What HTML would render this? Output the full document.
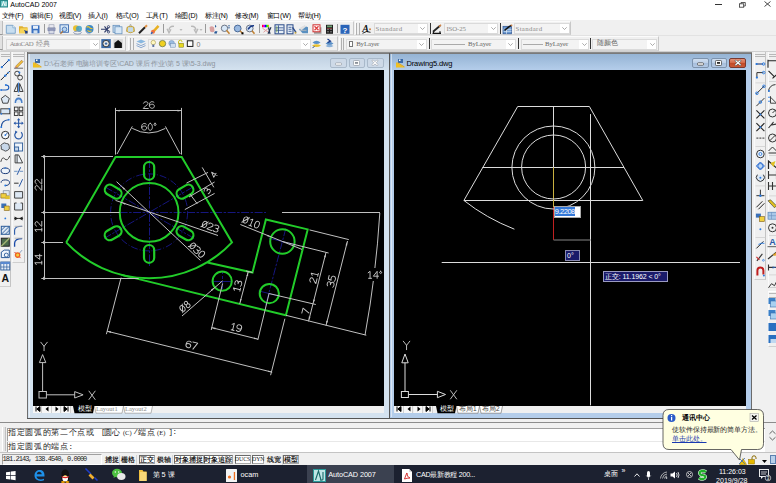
<!DOCTYPE html>
<html><head><meta charset="utf-8">
<style>
*{margin:0;padding:0;box-sizing:border-box}
html,body{width:776px;height:483px;overflow:hidden;background:#f0f0f0;font-family:"Liberation Sans",sans-serif;position:relative}
.a{position:absolute}
.t{position:absolute;white-space:nowrap;line-height:1}
svg{overflow:visible}
</style></head><body>
<div class="a" style="left:0px;top:0px;width:776px;height:20px;background:#fff"></div>
<svg class="a" style="left:0px;top:0px" width="8" height="8" viewBox="0 0 8 8"><rect x="0" y="0" width="8" height="7.5" fill="#2a8a8a"/><rect x="1" y="1" width="6" height="5.5" fill="#6ec4c4"/><path d="M2,6 L3.5,1.5 L5,6 M6,2 L6,6" stroke="#fff" stroke-width="0.9" fill="none"/></svg>
<div class="t" style="left:10.3px;top:1.3px;font-size:7px;color:#000">AutoCAD 2007</div>
<div class="t" style="left:1.5px;top:12.1px;font-size:7px;color:#000;letter-spacing:-0.2px">文件(F)</div>
<div class="t" style="left:30.4px;top:12.1px;font-size:7px;color:#000;letter-spacing:-0.2px">编辑(E)</div>
<div class="t" style="left:58.8px;top:12.1px;font-size:7px;color:#000;letter-spacing:-0.2px">视图(V)</div>
<div class="t" style="left:88px;top:12.1px;font-size:7px;color:#000;letter-spacing:-0.2px">插入(I)</div>
<div class="t" style="left:115.5px;top:12.1px;font-size:7px;color:#000;letter-spacing:-0.2px">格式(O)</div>
<div class="t" style="left:145.6px;top:12.1px;font-size:7px;color:#000;letter-spacing:-0.2px">工具(T)</div>
<div class="t" style="left:174.7px;top:12.1px;font-size:7px;color:#000;letter-spacing:-0.2px">绘图(D)</div>
<div class="t" style="left:205px;top:12.1px;font-size:7px;color:#000;letter-spacing:-0.2px">标注(N)</div>
<div class="t" style="left:234.8px;top:12.1px;font-size:7px;color:#000;letter-spacing:-0.2px">修改(M)</div>
<div class="t" style="left:266.5px;top:12.1px;font-size:7px;color:#000;letter-spacing:-0.2px">窗口(W)</div>
<div class="t" style="left:298px;top:12.1px;font-size:7px;color:#000;letter-spacing:-0.2px">帮助(H)</div>
<div class="a" style="left:715px;top:3.5px;width:6.5px;height:0.8px;background:#333"></div>
<svg class="a" style="left:738.5px;top:1.5px" width="7" height="5.5" viewBox="0 0 7 5.5"><rect x="0.5" y="1.8" width="4.2" height="3.4" fill="none" stroke="#333" stroke-width="0.8"/><path d="M2,1.8 V0.5 H6.3 V4 H4.7" fill="none" stroke="#333" stroke-width="0.8"/></svg>
<svg class="a" style="left:764px;top:1px" width="7" height="6" viewBox="0 0 7 6"><path d="M0.5,0.5 L6.5,5.5 M6.5,0.5 L0.5,5.5" stroke="#333" stroke-width="0.9"/></svg>
<div class="a" style="left:0px;top:20px;width:776px;height:31.5px;background:#f0f0f0"></div>
<div class="a" style="left:0px;top:35.3px;width:776px;height:1px;background:#e2e2e2"></div>
<div class="a" style="left:0px;top:50.8px;width:776px;height:1px;background:#cfcfcf"></div>
<div class="a" style="left:26.5px;top:52px;width:725.5px;height:0.8px;background:#8a8a8a"></div>
<div class="a" style="left:0px;top:21px;width:353.5px;height:14.200000000000003px;background:#f0f0f0;border-top:1px solid #fbfbfb;border-left:1px solid #fbfbfb;border-bottom:1px solid #d4d4d4;border-right:1px solid #c8c8c8"></div>
<div class="a" style="left:355px;top:21px;width:216px;height:14.200000000000003px;background:#f0f0f0;border-top:1px solid #fbfbfb;border-left:1px solid #fbfbfb;border-bottom:1px solid #d4d4d4;border-right:1px solid #c8c8c8"></div>
<div class="a" style="left:0px;top:36.3px;width:125.5px;height:14.300000000000004px;background:#f0f0f0;border-top:1px solid #fbfbfb;border-left:1px solid #fbfbfb;border-bottom:1px solid #d4d4d4;border-right:1px solid #c8c8c8"></div>
<div class="a" style="left:127.5px;top:36.3px;width:210.0px;height:14.300000000000004px;background:#f0f0f0;border-top:1px solid #fbfbfb;border-left:1px solid #fbfbfb;border-bottom:1px solid #d4d4d4;border-right:1px solid #c8c8c8"></div>
<div class="a" style="left:339px;top:36.3px;width:320px;height:14.300000000000004px;background:#f0f0f0;border-top:1px solid #fbfbfb;border-left:1px solid #fbfbfb;border-bottom:1px solid #d4d4d4;border-right:1px solid #c8c8c8"></div>
<div class="a" style="left:356px;top:22.5px;width:0.8px;height:12.200000000000003px;background:#b0b0b0"></div>
<div class="a" style="left:358.8px;top:22.5px;width:0.8px;height:12.200000000000003px;background:#b0b0b0"></div>
<div class="a" style="left:130.3px;top:37.8px;width:0.8px;height:12.300000000000004px;background:#b0b0b0"></div>
<div class="a" style="left:133.10000000000002px;top:37.8px;width:0.8px;height:12.300000000000004px;background:#b0b0b0"></div>
<div class="a" style="left:340.6px;top:37.8px;width:0.8px;height:12.300000000000004px;background:#b0b0b0"></div>
<div class="a" style="left:343.40000000000003px;top:37.8px;width:0.8px;height:12.300000000000004px;background:#b0b0b0"></div>
<div class="a" style="left:0px;top:21px;width:3px;height:14.2px;background:#e2e2e2;border-right:1px solid #bdbdbd;border-bottom:1px solid #999"></div>
<div class="a" style="left:0px;top:36.3px;width:3px;height:14.2px;background:#e2e2e2;border-right:1px solid #bdbdbd;border-bottom:1px solid #999"></div>
<div class="a" style="left:43.5px;top:23.5px;width:1px;height:9.200000000000003px;background:#9a9a9a"></div>
<div class="a" style="left:97.5px;top:23.5px;width:1px;height:9.200000000000003px;background:#9a9a9a"></div>
<div class="a" style="left:163px;top:23.5px;width:1px;height:9.200000000000003px;background:#9a9a9a"></div>
<div class="a" style="left:205px;top:23.5px;width:1px;height:9.200000000000003px;background:#9a9a9a"></div>
<div class="a" style="left:259px;top:23.5px;width:1px;height:9.200000000000003px;background:#9a9a9a"></div>
<div class="a" style="left:337px;top:23.5px;width:1px;height:9.200000000000003px;background:#9a9a9a"></div>
<div class="a" style="left:429.5px;top:23px;width:1.2px;height:11px;background:#333"></div>
<div class="a" style="left:499.5px;top:23px;width:1.2px;height:11px;background:#333"></div>
<div class="a" style="left:428.5px;top:38px;width:1.2px;height:11px;background:#333"></div>
<div class="a" style="left:518px;top:38px;width:1.2px;height:11px;background:#333"></div>
<div class="a" style="left:590px;top:38px;width:1.2px;height:11px;background:#333"></div>
<div class="a" style="left:374px;top:23px;width:53.5px;height:11px;background:#f3f3f3;border:1px solid #dadada"></div>
<div class="a" style="left:417.5px;top:24px;width:9px;height:9px;background:#fff"></div>
<svg class="a" style="left:420.0px;top:27.0px" width="5" height="3" viewBox="0 0 5 3"><path d="M0.3,0.3 L2.5,2.5 L4.7,0.3" fill="none" stroke="#888" stroke-width="0.7"/></svg>
<div class="a" style="left:444px;top:23px;width:54px;height:11px;background:#f3f3f3;border:1px solid #dadada"></div>
<div class="a" style="left:488px;top:24px;width:9px;height:9px;background:#fff"></div>
<svg class="a" style="left:490.5px;top:27.0px" width="5" height="3" viewBox="0 0 5 3"><path d="M0.3,0.3 L2.5,2.5 L4.7,0.3" fill="none" stroke="#888" stroke-width="0.7"/></svg>
<div class="a" style="left:514px;top:23px;width:55.5px;height:11px;background:#f3f3f3;border:1px solid #dadada"></div>
<div class="a" style="left:559.5px;top:24px;width:9px;height:9px;background:#fff"></div>
<svg class="a" style="left:562.0px;top:27.0px" width="5" height="3" viewBox="0 0 5 3"><path d="M0.3,0.3 L2.5,2.5 L4.7,0.3" fill="none" stroke="#888" stroke-width="0.7"/></svg>
<div class="a" style="left:5.5px;top:38.5px;width:94.5px;height:11.5px;background:#f3f3f3;border:1px solid #dadada"></div>
<div class="a" style="left:90px;top:39.5px;width:9px;height:9.5px;background:#fff"></div>
<svg class="a" style="left:92.5px;top:42.75px" width="5" height="3" viewBox="0 0 5 3"><path d="M0.3,0.3 L2.5,2.5 L4.7,0.3" fill="none" stroke="#888" stroke-width="0.7"/></svg>
<div class="t" style="left:375.5px;top:25.6px;font-family:Liberation Serif,serif;color:#8a8a8a;font-size:6.8px;letter-spacing:0.35px">Standard</div>
<div class="t" style="left:515.5px;top:25.6px;font-family:Liberation Serif,serif;color:#8a8a8a;font-size:6.8px;letter-spacing:0.35px">Standard</div>
<div class="t" style="left:446.4px;top:25.6px;font-family:Liberation Serif,serif;color:#8a8a8a;font-size:6.8px;letter-spacing:-0.12px">ISO-25</div>
<div class="t" style="left:9.8px;top:40.9px;font-family:Liberation Serif,serif;color:#8a8a8a;font-size:6.8px;letter-spacing:-0.7px">AutoCAD</div>
<div class="t" style="left:35.7px;top:40.6px;font-size:6.5px;color:#8a8a8a;letter-spacing:0px">经典</div>
<div class="a" style="left:147.5px;top:38.5px;width:163.0px;height:11.5px;background:#f3f3f3;border:1px solid #dadada"></div>
<div class="a" style="left:300.5px;top:39.5px;width:9px;height:9.5px;background:#fff"></div>
<svg class="a" style="left:303.0px;top:42.75px" width="5" height="3" viewBox="0 0 5 3"><path d="M0.3,0.3 L2.5,2.5 L4.7,0.3" fill="none" stroke="#888" stroke-width="0.7"/></svg>
<div class="a" style="left:346px;top:38.5px;width:80.5px;height:11.5px;background:#f3f3f3;border:1px solid #dadada"></div>
<div class="a" style="left:416.5px;top:39.5px;width:9px;height:9.5px;background:#fff"></div>
<svg class="a" style="left:419.0px;top:42.75px" width="5" height="3" viewBox="0 0 5 3"><path d="M0.3,0.3 L2.5,2.5 L4.7,0.3" fill="none" stroke="#888" stroke-width="0.7"/></svg>
<div class="a" style="left:348.5px;top:41.2px;width:4.8px;height:6.2px;background:#fff;border:1px solid #777"></div>
<div class="t" style="left:356.2px;top:41px;font-size:6.8px;color:#666;font-family:Liberation Serif,serif;letter-spacing:-0.1px">ByLayer</div>
<div class="a" style="left:431px;top:38.5px;width:84.5px;height:11.5px;background:#f3f3f3;border:1px solid #dadada"></div>
<div class="a" style="left:505.5px;top:39.5px;width:9px;height:9.5px;background:#fff"></div>
<svg class="a" style="left:508.0px;top:42.75px" width="5" height="3" viewBox="0 0 5 3"><path d="M0.3,0.3 L2.5,2.5 L4.7,0.3" fill="none" stroke="#888" stroke-width="0.7"/></svg>
<div class="a" style="left:434px;top:44px;width:30.5px;height:1.2px;background:#aaa"></div>
<div class="t" style="left:468px;top:41px;font-size:6.8px;color:#666;font-family:Liberation Serif,serif;letter-spacing:-0.1px">ByLayer</div>
<div class="a" style="left:521px;top:38.5px;width:68px;height:11.5px;background:#f3f3f3;border:1px solid #dadada"></div>
<div class="a" style="left:579px;top:39.5px;width:9px;height:9.5px;background:#fff"></div>
<svg class="a" style="left:581.5px;top:42.75px" width="5" height="3" viewBox="0 0 5 3"><path d="M0.3,0.3 L2.5,2.5 L4.7,0.3" fill="none" stroke="#888" stroke-width="0.7"/></svg>
<div class="a" style="left:523px;top:44px;width:20px;height:1.2px;background:#aaa"></div>
<div class="t" style="left:545px;top:41px;font-size:6.8px;color:#666;font-family:Liberation Serif,serif;letter-spacing:-0.1px">ByLayer</div>
<div class="a" style="left:592px;top:38.5px;width:65px;height:11.5px;background:#f3f3f3;border:1px solid #dadada"></div>
<div class="a" style="left:647px;top:39.5px;width:9px;height:9.5px;background:#fff"></div>
<svg class="a" style="left:649.5px;top:42.75px" width="5" height="3" viewBox="0 0 5 3"><path d="M0.3,0.3 L2.5,2.5 L4.7,0.3" fill="none" stroke="#888" stroke-width="0.7"/></svg>
<div class="t" style="left:597px;top:40.45px;font-size:6.8px;color:#666">随颜色</div>
<div class="t" style="left:196.5px;top:41px;font-size:7px;color:#777">0</div>
<div class="a" style="left:0px;top:51.5px;width:26.5px;height:367.5px;background:#f0f0f0"></div>
<div class="a" style="left:0px;top:51.7px;width:11px;height:235px;background:#f0f0f0;border-right:1.2px solid #c4c4c4;border-bottom:1px solid #cfcfcf"></div>
<div class="a" style="left:12px;top:51.7px;width:12.8px;height:211px;background:#f0f0f0;border-left:1px solid #fafafa;border-right:1px solid #c4c4c4;border-bottom:1px solid #cfcfcf"></div>
<div class="a" style="left:0.5px;top:54px;width:9.5px;height:0.9px;background:#b8b8b8"></div>
<div class="a" style="left:0.5px;top:55.8px;width:9.5px;height:0.9px;background:#b8b8b8"></div>
<div class="a" style="left:13px;top:54px;width:10.8px;height:0.9px;background:#b8b8b8"></div>
<div class="a" style="left:13px;top:55.8px;width:10.8px;height:0.9px;background:#b8b8b8"></div>
<div class="a" style="left:26.5px;top:52px;width:1.3px;height:367px;background:#6e6e6e"></div>
<div class="a" style="left:752px;top:51.5px;width:24px;height:367.5px;background:#f0f0f0"></div>
<div class="a" style="left:753.5px;top:51.7px;width:12.8px;height:228px;background:#f0f0f0;border-left:1px solid #fafafa;border-right:1.2px solid #c4c4c4;border-bottom:1px solid #cfcfcf"></div>
<div class="a" style="left:767.8px;top:51.7px;width:8.2px;height:236.5px;background:#f0f0f0;border-left:1px solid #fafafa;border-bottom:1px solid #cfcfcf"></div>
<div class="a" style="left:767.8px;top:290.5px;width:8.2px;height:56.5px;background:#f0f0f0;border-left:1px solid #fafafa;border-top:1px solid #fff;border-bottom:1px solid #cfcfcf"></div>
<div class="a" style="left:754.5px;top:54.3px;width:10.5px;height:0.9px;background:#b8b8b8"></div>
<div class="a" style="left:754.5px;top:56.1px;width:10.5px;height:0.9px;background:#b8b8b8"></div>
<div class="a" style="left:769px;top:54.3px;width:7px;height:0.9px;background:#b8b8b8"></div>
<div class="a" style="left:769px;top:56.1px;width:7px;height:0.9px;background:#b8b8b8"></div>
<div class="a" style="left:769px;top:293.2px;width:7px;height:0.9px;background:#b8b8b8"></div>
<div class="a" style="left:769px;top:296.6px;width:7px;height:0.9px;background:#b8b8b8"></div>
<div class="a" style="left:27.7px;top:52.5px;width:361.3px;height:365.5px;background:#d4e2ef"></div>
<div class="a" style="left:27.7px;top:52.5px;width:361.3px;height:17.900000000000006px;background:linear-gradient(180deg,#bccddf,#d4e2ef)"></div>
<div class="a" style="left:27.7px;top:52.5px;width:361.3px;height:0.8px;background:#7a7a7a"></div>
<div class="a" style="left:32.5px;top:70.4px;width:351.5px;height:335.20000000000005px;background:#000"></div>
<div class="a" style="left:32.5px;top:405.6px;width:351.5px;height:7.6px;background:#f0f0f0"></div>
<div class="a" style="left:28.7px;top:53.5px;width:0.8px;height:363.5px;background:rgba(255,255,255,0.5)"></div>
<div class="a" style="left:390.3px;top:52.5px;width:360.99999999999994px;height:365.5px;background:#b4cdea"></div>
<div class="a" style="left:390.3px;top:52.5px;width:360.99999999999994px;height:17.900000000000006px;background:linear-gradient(180deg,#93b2d3,#b4cdea)"></div>
<div class="a" style="left:390.3px;top:52.5px;width:360.99999999999994px;height:0.8px;background:#7a7a7a"></div>
<div class="a" style="left:394.4px;top:70.4px;width:351.6px;height:335.20000000000005px;background:#000"></div>
<div class="a" style="left:394.4px;top:405.6px;width:351.6px;height:7.6px;background:#f0f0f0"></div>
<div class="a" style="left:391.3px;top:53.5px;width:0.8px;height:363.5px;background:rgba(255,255,255,0.5)"></div>
<div class="a" style="left:388.8px;top:52.5px;width:1.5px;height:366px;background:#555"></div>
<div class="a" style="left:751.2px;top:52.5px;width:1px;height:366px;background:#6b6b6b"></div>
<div class="a" style="left:26.5px;top:418px;width:726px;height:1px;background:#555"></div>
<svg class="a" style="left:33px;top:58.8px" width="8.5" height="8.5" viewBox="0 0 8.5 8.5"><rect x="2" y="0" width="5" height="4" fill="#3a6aa8"/><rect x="3" y="0.5" width="1.5" height="1.5" fill="#fff"/><path d="M0,8.5 L0,3.5 L8.5,8.5 Z" fill="#f0c020"/><path d="M0,3.5 L2,3.5 L8.5,7.5 L8.5,8.5" fill="#e8a810"/></svg>
<div class="t" style="left:44px;top:59.5px;font-size:7px;color:#8d949c;letter-spacing:-0.05px">D:\石老师 电脑培训专区\CAD 课后 作业\第 5 课\5-3.dwg</div>
<svg class="a" style="left:396px;top:58.8px" width="8.5" height="8.5" viewBox="0 0 8.5 8.5"><rect x="2" y="0" width="5" height="4" fill="#3a6aa8"/><rect x="3" y="0.5" width="1.5" height="1.5" fill="#fff"/><path d="M0,8.5 L0,3.5 L8.5,8.5 Z" fill="#f0c020"/><path d="M0,3.5 L2,3.5 L8.5,7.5 L8.5,8.5" fill="#e8a810"/></svg>
<div class="t" style="left:406.5px;top:59.8px;font-size:7.5px;color:#000;letter-spacing:-0.15px">Drawing5.dwg</div>
<div class="a" style="left:330px;top:58.2px;width:16.5px;height:9.6px;background:#cdd9e7;border:1px solid #a9b9ca;border-radius:2px"></div>
<svg class="a" style="left:334.75px;top:62.0px" width="7" height="4" viewBox="0 0 7 4"><rect x="0.5" y="0.8" width="6" height="2.4" rx="0.8" fill="#fafafa" stroke="#9aa2ac" stroke-width="0.8"/></svg>
<div class="a" style="left:348.5px;top:58.2px;width:16.5px;height:9.6px;background:#cdd9e7;border:1px solid #a9b9ca;border-radius:2px"></div>
<svg class="a" style="left:353.25px;top:60.0px" width="7" height="6" viewBox="0 0 7 6"><rect x="0.5" y="0.5" width="6" height="5" rx="0.8" fill="#fafafa" stroke="#9aa2ac" stroke-width="0.8"/><rect x="2" y="2" width="3" height="1.8" fill="#8a9098"/></svg>
<div class="a" style="left:367px;top:58.2px;width:16.5px;height:9.6px;background:#cdd9e7;border:1px solid #a9b9ca;border-radius:2px"></div>
<svg class="a" style="left:372.25px;top:60.2px" width="6" height="5.6" viewBox="0 0 6 5.6"><path d="M0.8,0.8 L5.2,4.8 M5.2,0.8 L0.8,4.8" stroke="#9aa2ac" stroke-width="2.2" stroke-linecap="round"/><path d="M0.8,0.8 L5.2,4.8 M5.2,0.8 L0.8,4.8" stroke="#fafafa" stroke-width="1.2" stroke-linecap="round"/></svg>
<div class="a" style="left:692px;top:58.4px;width:16.5px;height:9.4px;background:linear-gradient(180deg,#cfdef0 0%,#bdd0e8 45%,#a6bedc 55%,#b4c9e4 100%);border:1px solid #7d93ad;border-radius:2px"></div>
<svg class="a" style="left:696.75px;top:62.1px" width="7" height="4" viewBox="0 0 7 4"><rect x="0.5" y="0.8" width="6" height="2.4" rx="0.8" fill="#fafafa" stroke="#4a4a4a" stroke-width="0.8"/></svg>
<div class="a" style="left:710.5px;top:58.4px;width:16.5px;height:9.4px;background:linear-gradient(180deg,#cfdef0 0%,#bdd0e8 45%,#a6bedc 55%,#b4c9e4 100%);border:1px solid #7d93ad;border-radius:2px"></div>
<svg class="a" style="left:715.25px;top:60.1px" width="7" height="6" viewBox="0 0 7 6"><rect x="0.5" y="0.5" width="6" height="5" rx="0.8" fill="#fafafa" stroke="#4a4a4a" stroke-width="0.8"/><rect x="2" y="2" width="3" height="1.8" fill="#2a2a2a"/></svg>
<div class="a" style="left:729px;top:58.4px;width:17px;height:9.4px;background:linear-gradient(180deg,#e4937a 0%,#d46a4a 45%,#c24a28 55%,#cc5a38 100%);border:1px solid #7a3a30;border-radius:2px"></div>
<svg class="a" style="left:734.5px;top:60.300000000000004px" width="6" height="5.6" viewBox="0 0 6 5.6"><path d="M0.8,0.8 L5.2,4.8 M5.2,0.8 L0.8,4.8" stroke="#4a4a4a" stroke-width="2.2" stroke-linecap="round"/><path d="M0.8,0.8 L5.2,4.8 M5.2,0.8 L0.8,4.8" stroke="#fafafa" stroke-width="1.2" stroke-linecap="round"/></svg>
<div class="a" style="left:32.8px;top:405.6px;width:9.2px;height:7.3px;background:#f7f7f7;border-right:1px solid #d0d0d0"></div>
<div class="a" style="left:42.4px;top:405.6px;width:9.2px;height:7.3px;background:#f7f7f7;border-right:1px solid #d0d0d0"></div>
<div class="a" style="left:52.0px;top:405.6px;width:9.2px;height:7.3px;background:#f7f7f7;border-right:1px solid #d0d0d0"></div>
<div class="a" style="left:61.599999999999994px;top:405.6px;width:9.2px;height:7.3px;background:#f7f7f7;border-right:1px solid #d0d0d0"></div>
<svg class="a" style="left:34.5px;top:406.40000000000003px" width="6" height="6" viewBox="0 0 6 6"><path d="M1,0.5 V5.5 M5,0.5 L1.8,3 L5,5.5 Z" stroke="#000" stroke-width="1" fill="#000"/></svg>
<svg class="a" style="left:44.1px;top:406.40000000000003px" width="6" height="6" viewBox="0 0 6 6"><path d="M4.5,0.5 L1.5,3 L4.5,5.5 Z" fill="#000"/></svg>
<svg class="a" style="left:53.7px;top:406.40000000000003px" width="6" height="6" viewBox="0 0 6 6"><path d="M1.5,0.5 L4.5,3 L1.5,5.5 Z" fill="#000"/></svg>
<svg class="a" style="left:63.3px;top:406.40000000000003px" width="6" height="6" viewBox="0 0 6 6"><path d="M5,0.5 V5.5 M1,0.5 L4.2,3 L1,5.5 Z" stroke="#000" stroke-width="1" fill="#000"/></svg>
<div class="a" style="left:394.7px;top:405.6px;width:9.2px;height:7.3px;background:#f7f7f7;border-right:1px solid #d0d0d0"></div>
<div class="a" style="left:404.3px;top:405.6px;width:9.2px;height:7.3px;background:#f7f7f7;border-right:1px solid #d0d0d0"></div>
<div class="a" style="left:413.9px;top:405.6px;width:9.2px;height:7.3px;background:#f7f7f7;border-right:1px solid #d0d0d0"></div>
<div class="a" style="left:423.5px;top:405.6px;width:9.2px;height:7.3px;background:#f7f7f7;border-right:1px solid #d0d0d0"></div>
<svg class="a" style="left:396.4px;top:406.40000000000003px" width="6" height="6" viewBox="0 0 6 6"><path d="M1,0.5 V5.5 M5,0.5 L1.8,3 L5,5.5 Z" stroke="#000" stroke-width="1" fill="#000"/></svg>
<svg class="a" style="left:406.0px;top:406.40000000000003px" width="6" height="6" viewBox="0 0 6 6"><path d="M4.5,0.5 L1.5,3 L4.5,5.5 Z" fill="#000"/></svg>
<svg class="a" style="left:415.59999999999997px;top:406.40000000000003px" width="6" height="6" viewBox="0 0 6 6"><path d="M1.5,0.5 L4.5,3 L1.5,5.5 Z" fill="#000"/></svg>
<svg class="a" style="left:425.2px;top:406.40000000000003px" width="6" height="6" viewBox="0 0 6 6"><path d="M5,0.5 V5.5 M1,0.5 L4.2,3 L1,5.5 Z" stroke="#000" stroke-width="1" fill="#000"/></svg>
<svg class="a" style="left:72px;top:405.6px" width="85" height="7.5" viewBox="0 0 85 7.5"><path d="M1,0 L2.5,7.2 L21,7.2 L22.5,0 Z" fill="#000"/><path d="M22.5,0 L24,7.2 L50,7.2 L51.5,0" fill="#fff" stroke="#888" stroke-width="0.6"/><path d="M51.5,0 L53,7.2 L79,7.2 L80.5,0" fill="#fff" stroke="#888" stroke-width="0.6"/></svg>
<div class="t" style="left:78px;top:406px;font-size:6.5px;color:#fff">模型</div>
<div class="t" style="left:96px;top:406.2px;font-size:6.5px;color:#888;font-family:Liberation Serif,serif">Layout1</div>
<div class="t" style="left:125px;top:406.2px;font-size:6.5px;color:#888;font-family:Liberation Serif,serif">Layout2</div>
<svg class="a" style="left:435px;top:405.6px" width="70" height="7.5" viewBox="0 0 70 7.5"><path d="M1,0 L2.5,7.2 L20,7.2 L21.5,0 Z" fill="#000"/><path d="M21.5,0 L23,7.2 L43,7.2 L44.5,0" fill="#fff" stroke="#666" stroke-width="0.6"/><path d="M44.5,0 L46,7.2 L66,7.2 L67.5,0" fill="#fff" stroke="#666" stroke-width="0.6"/></svg>
<div class="t" style="left:440px;top:406px;font-size:6.5px;color:#fff">模型</div>
<div class="t" style="left:459px;top:406px;font-size:6.5px;color:#444">布局1</div>
<div class="t" style="left:482px;top:406px;font-size:6.5px;color:#444">布局2</div>
<svg class="a" style="left:0;top:0" width="776" height="483" viewBox="0 0 776 483" font-family="Liberation Sans, sans-serif">
<defs><clipPath id="cl"><rect x="32.5" y="70.4" width="351.5" height="335.2"/></clipPath><clipPath id="cr"><rect x="394.4" y="70.4" width="351.6" height="335.2"/></clipPath></defs>
<g clip-path="url(#cl)"><line x1="119.6" y1="212.5" x2="266.0" y2="212.5" stroke="#16167e" stroke-width="1" stroke-dasharray="8 1.5 2.5 1.5"/>
<line x1="149.5" y1="160.0" x2="149.5" y2="266.0" stroke="#16167e" stroke-width="1" stroke-dasharray="8 1.5 2.5 1.5"/>
<line x1="104.1" y1="238.4" x2="194.1" y2="186.4" stroke="#16167e" stroke-width="1" stroke-dasharray="8 1.5 2.5 1.5"/>
<line x1="194.1" y1="238.4" x2="104.1" y2="186.4" stroke="#16167e" stroke-width="1" stroke-dasharray="8 1.5 2.5 1.5"/>
<circle cx="149.1" cy="212.4" r="38.5" fill="none" stroke="#16167e" stroke-width="1" stroke-dasharray="7 2 1 2"/>
<line x1="285.8" y1="228.4" x2="265.4" y2="306.4" stroke="#16167e" stroke-width="1" stroke-dasharray="8 1.5 2.5 1.5"/>
<line x1="212.0" y1="281.5" x2="232.0" y2="281.5" stroke="#16167e" stroke-width="1" />
<line x1="268.8" y1="238.1" x2="296.0" y2="244.9" stroke="#16167e" stroke-width="1" />
<line x1="258.6" y1="290.9" x2="280.0" y2="296.3" stroke="#16167e" stroke-width="1" />
<line x1="222.5" y1="271.0" x2="222.5" y2="291.0" stroke="#16167e" stroke-width="1" stroke-dasharray="3 2"/>
<circle cx="149.1" cy="212.4" r="29.4" fill="none" stroke="#22cc2a" stroke-width="2"/>
<rect x="179.9" y="182.8" width="10.2" height="17.8" rx="5.1" fill="none" stroke="#22cc2a" stroke-width="2.2" transform="rotate(60 185.0 191.7)"/>
<rect x="144.0" y="162.0" width="10.2" height="17.8" rx="5.1" fill="none" stroke="#22cc2a" stroke-width="2.2" transform="rotate(0 149.1 170.9)"/>
<rect x="108.1" y="182.8" width="10.2" height="17.8" rx="5.1" fill="none" stroke="#22cc2a" stroke-width="2.2" transform="rotate(-60 113.2 191.7)"/>
<rect x="108.1" y="224.2" width="10.2" height="17.8" rx="5.1" fill="none" stroke="#22cc2a" stroke-width="2.2" transform="rotate(-120 113.2 233.2)"/>
<rect x="144.0" y="245.0" width="10.2" height="17.8" rx="5.1" fill="none" stroke="#22cc2a" stroke-width="2.2" transform="rotate(-180 149.1 253.9)"/>
<rect x="179.9" y="224.3" width="10.2" height="17.8" rx="5.1" fill="none" stroke="#22cc2a" stroke-width="2.2" transform="rotate(-240 185.0 233.2)"/>
<path d="M66.2,242.4 L115.5,157 L181.7,157 L232,242.4 A113.9,113.9 0 0 1 66.2,242.4" fill="none" stroke="#22cc2a" stroke-width="2" stroke-linejoin="miter"/>
<path d="M207.4,262.5 L252.5,272.5 L265.9,219.5 L307.7,229.4 L285.9,315.3 L121.5,274.9" fill="none" stroke="#22cc2a" stroke-width="2"/>
<circle cx="222.2" cy="281.2" r="9.6" fill="none" stroke="#22cc2a" stroke-width="2"/>
<circle cx="282.4" cy="241.5" r="12.2" fill="none" stroke="#22cc2a" stroke-width="2"/>
<circle cx="269.3" cy="293.6" r="9.6" fill="none" stroke="#22cc2a" stroke-width="2"/>
<line x1="115.5" y1="107.9" x2="115.5" y2="154.6" stroke="#c0c0c0" stroke-width="1" />
<line x1="181.5" y1="107.9" x2="181.5" y2="154.6" stroke="#c0c0c0" stroke-width="1" />
<line x1="115.7" y1="110.5" x2="181.5" y2="110.5" stroke="#c0c0c0" stroke-width="1" />
<polygon points="115.7,110.7 119.7,109.8 119.7,111.6" fill="#c0c0c0"/>
<polygon points="181.5,110.7 177.5,111.6 177.5,109.8" fill="#c0c0c0"/>
<g transform="translate(148.80,105.00) rotate(0) scale(1.000) translate(-5.55,-3.5)" fill="none" stroke="#c4c4c4" stroke-width="0.95" stroke-linecap="round" stroke-linejoin="round"><path transform="translate(0.00,0)" d="M0.2,1.7 C0.6,-0.3 4.7,-0.4 4.7,2 C4.7,3.6 0.4,5.3 0,7 H5"/><path transform="translate(6.10,0)" d="M4.6,0.8 C3.1,-0.5 0,-0.3 0,3.8 C0,7.6 5,7.6 5,4.7 C5,2.1 1,2.1 0.1,4.2"/></g>
<line x1="117.0" y1="154.0" x2="132.3" y2="126.4" stroke="#c0c0c0" stroke-width="1" />
<line x1="180.2" y1="154.0" x2="165.4" y2="126.4" stroke="#c0c0c0" stroke-width="1" />
<path d="M132.3,128.4 Q148.8,137.5 165.4,128.4" fill="none" stroke="#c0c0c0" stroke-width="1"/>
<g transform="translate(148.80,126.80) rotate(0) scale(1.000) translate(-7.15,-3.5)" fill="none" stroke="#c4c4c4" stroke-width="0.95" stroke-linecap="round" stroke-linejoin="round"><path transform="translate(0.00,0)" d="M4.6,0.8 C3.1,-0.5 0,-0.3 0,3.8 C0,7.6 5,7.6 5,4.7 C5,2.1 1,2.1 0.1,4.2"/><path transform="translate(6.10,0)" d="M2.5,0 C-0.4,0 -0.4,7 2.5,7 C5.4,7 5.4,0 2.5,0 Z"/><path transform="translate(12.20,0)" d="M1.2,0 C-0.2,0 -0.2,2.2 1.2,2.2 C2.6,2.2 2.6,0 1.2,0 Z"/></g>
<line x1="41.3" y1="156.5" x2="113.0" y2="156.5" stroke="#c0c0c0" stroke-width="1" />
<line x1="44.5" y1="156.6" x2="44.5" y2="278.3" stroke="#c0c0c0" stroke-width="1" />
<line x1="41.3" y1="212.5" x2="119.6" y2="212.5" stroke="#c0c0c0" stroke-width="1" />
<line x1="41.3" y1="242.5" x2="63.0" y2="242.5" stroke="#c0c0c0" stroke-width="1" />
<line x1="41.3" y1="278.5" x2="138.7" y2="278.5" stroke="#c0c0c0" stroke-width="1" />
<rect x="43.1" y="155.1" width="2" height="3" fill="#c0c0c0"/>
<rect x="43.1" y="210.9" width="2" height="3" fill="#c0c0c0"/>
<rect x="43.1" y="240.9" width="2" height="3" fill="#c0c0c0"/>
<rect x="43.1" y="276.8" width="2" height="3" fill="#c0c0c0"/>
<g transform="translate(38.30,184.70) rotate(-90) scale(1.000) translate(-5.55,-3.5)" fill="none" stroke="#c4c4c4" stroke-width="0.95" stroke-linecap="round" stroke-linejoin="round"><path transform="translate(0.00,0)" d="M0.2,1.7 C0.6,-0.3 4.7,-0.4 4.7,2 C4.7,3.6 0.4,5.3 0,7 H5"/><path transform="translate(6.10,0)" d="M0.2,1.7 C0.6,-0.3 4.7,-0.4 4.7,2 C4.7,3.6 0.4,5.3 0,7 H5"/></g>
<g transform="translate(38.30,226.90) rotate(-90) scale(1.000) translate(-5.55,-3.5)" fill="none" stroke="#c4c4c4" stroke-width="0.95" stroke-linecap="round" stroke-linejoin="round"><path transform="translate(0.00,0)" d="M0.9,1.5 L2.8,0 V7 M1.3,7 H4.3"/><path transform="translate(6.10,0)" d="M0.2,1.7 C0.6,-0.3 4.7,-0.4 4.7,2 C4.7,3.6 0.4,5.3 0,7 H5"/></g>
<g transform="translate(38.30,260.00) rotate(-90) scale(1.000) translate(-5.55,-3.5)" fill="none" stroke="#c4c4c4" stroke-width="0.95" stroke-linecap="round" stroke-linejoin="round"><path transform="translate(0.00,0)" d="M0.9,1.5 L2.8,0 V7 M1.3,7 H4.3"/><path transform="translate(6.10,0)" d="M3.8,7 V0 L0,4.9 H5.2"/></g>
<line x1="116.6" y1="181.7" x2="200.4" y2="260.4" stroke="#c0c0c0" stroke-width="1" />
<polygon points="121.5,186.3 125.0,188.4 123.8,189.7" fill="#c0c0c0"/>
<g transform="translate(197.20,250.00) rotate(43) scale(1.000) translate(-8.60,-3.5)" fill="none" stroke="#c4c4c4" stroke-width="0.95" stroke-linecap="round" stroke-linejoin="round"><path transform="translate(0.00,0)" d="M2.5,0.3 C-0.4,0.3 -0.4,6.7 2.5,6.7 C5.4,6.7 5.4,0.3 2.5,0.3 Z M-0.2,7 L5.2,0"/><path transform="translate(6.10,0)" d="M0.2,0.9 C1.4,-0.4 4.8,-0.1 4.7,1.8 C4.6,3.1 3.2,3.4 2,3.4 C3.6,3.4 5,3.9 5,5.2 C5,7.5 1.1,7.4 0,6.3"/><path transform="translate(12.20,0)" d="M2.5,0 C-0.4,0 -0.4,7 2.5,7 C5.4,7 5.4,0 2.5,0 Z"/></g>
<line x1="115.5" y1="200.4" x2="218.0" y2="235.5" stroke="#c0c0c0" stroke-width="1" />
<polygon points="121.5,202.5 125.6,203.0 125.0,204.7" fill="#c0c0c0"/>
<g transform="translate(210.40,226.40) rotate(19.5) scale(1.000) translate(-8.60,-3.5)" fill="none" stroke="#c4c4c4" stroke-width="0.95" stroke-linecap="round" stroke-linejoin="round"><path transform="translate(0.00,0)" d="M2.5,0.3 C-0.4,0.3 -0.4,6.7 2.5,6.7 C5.4,6.7 5.4,0.3 2.5,0.3 Z M-0.2,7 L5.2,0"/><path transform="translate(6.10,0)" d="M0.2,1.7 C0.6,-0.3 4.7,-0.4 4.7,2 C4.7,3.6 0.4,5.3 0,7 H5"/><path transform="translate(12.20,0)" d="M0.2,0.9 C1.4,-0.4 4.8,-0.1 4.7,1.8 C4.6,3.1 3.2,3.4 2,3.4 C3.6,3.4 5,3.9 5,5.2 C5,7.5 1.1,7.4 0,6.3"/></g>
<line x1="186.5" y1="183.1" x2="208.0" y2="172.4" stroke="#c0c0c0" stroke-width="1" />
<line x1="189.0" y1="197.0" x2="214.6" y2="182.0" stroke="#c0c0c0" stroke-width="1" />
<line x1="184.8" y1="209.6" x2="214.6" y2="193.4" stroke="#c0c0c0" stroke-width="1" />
<line x1="202.2" y1="167.4" x2="213.8" y2="187.3" stroke="#c0c0c0" stroke-width="1" />
<line x1="189.8" y1="193.9" x2="197.3" y2="203.8" stroke="#c0c0c0" stroke-width="1" />
<g transform="translate(213.80,174.80) rotate(-60) scale(0.895) translate(-2.50,-3.5)" fill="none" stroke="#c4c4c4" stroke-width="1.06" stroke-linecap="round" stroke-linejoin="round"><path transform="translate(0.00,0)" d="M3.8,7 V0 L0,4.9 H5.2"/></g>
<g transform="translate(207.20,190.60) rotate(-60) scale(0.895) translate(-2.50,-3.5)" fill="none" stroke="#c4c4c4" stroke-width="1.06" stroke-linecap="round" stroke-linejoin="round"><path transform="translate(0.00,0)" d="M0.2,0.9 C1.4,-0.4 4.8,-0.1 4.7,1.8 C4.6,3.1 3.2,3.4 2,3.4 C3.6,3.4 5,3.9 5,5.2 C5,7.5 1.1,7.4 0,6.3"/></g>
<line x1="240.4" y1="224.5" x2="302.0" y2="249.4" stroke="#c0c0c0" stroke-width="1" />
<polygon points="271.2,237.0 267.2,236.3 267.8,234.7" fill="#c0c0c0"/>
<g transform="translate(251.30,222.30) rotate(22) scale(1.000) translate(-8.60,-3.5)" fill="none" stroke="#c4c4c4" stroke-width="0.95" stroke-linecap="round" stroke-linejoin="round"><path transform="translate(0.00,0)" d="M2.5,0.3 C-0.4,0.3 -0.4,6.7 2.5,6.7 C5.4,6.7 5.4,0.3 2.5,0.3 Z M-0.2,7 L5.2,0"/><path transform="translate(6.10,0)" d="M0.9,1.5 L2.8,0 V7 M1.3,7 H4.3"/><path transform="translate(12.20,0)" d="M2.5,0 C-0.4,0 -0.4,7 2.5,7 C5.4,7 5.4,0 2.5,0 Z"/></g>
<line x1="309.5" y1="229.9" x2="348.8" y2="239.6" stroke="#c0c0c0" stroke-width="1" />
<line x1="282.4" y1="241.5" x2="328.6" y2="253.0" stroke="#c0c0c0" stroke-width="1" />
<line x1="269.3" y1="293.6" x2="315.8" y2="304.5" stroke="#c0c0c0" stroke-width="1" />
<line x1="285.9" y1="315.3" x2="366.3" y2="335.2" stroke="#c0c0c0" stroke-width="1" />
<line x1="347.5" y1="241.0" x2="326.0" y2="325.7" stroke="#c0c0c0" stroke-width="1" />
<polygon points="347.3,241.5 347.2,245.6 345.5,245.2" fill="#c0c0c0"/>
<polygon points="326.2,324.8 326.3,320.7 328.0,321.1" fill="#c0c0c0"/>
<line x1="326.0" y1="252.5" x2="308.5" y2="321.4" stroke="#c0c0c0" stroke-width="1" />
<polygon points="325.8,253.3 325.7,257.4 324.0,257.0" fill="#c0c0c0"/>
<polygon points="313.3,303.5 313.4,299.4 315.1,299.8" fill="#c0c0c0"/>
<polygon points="308.7,320.6 308.8,316.5 310.5,316.9" fill="#c0c0c0"/>
<g transform="translate(331.30,281.30) rotate(-76) scale(1.000) translate(-5.55,-3.5)" fill="none" stroke="#c4c4c4" stroke-width="0.95" stroke-linecap="round" stroke-linejoin="round"><path transform="translate(0.00,0)" d="M0.2,0.9 C1.4,-0.4 4.8,-0.1 4.7,1.8 C4.6,3.1 3.2,3.4 2,3.4 C3.6,3.4 5,3.9 5,5.2 C5,7.5 1.1,7.4 0,6.3"/><path transform="translate(6.10,0)" d="M4.7,0 H0.9 L0.5,3.1 C2,2.2 5,2.4 5,4.7 C5,7.5 1.2,7.4 0,6.3"/></g>
<g transform="translate(313.80,277.30) rotate(-76) scale(1.000) translate(-5.55,-3.5)" fill="none" stroke="#c4c4c4" stroke-width="0.95" stroke-linecap="round" stroke-linejoin="round"><path transform="translate(0.00,0)" d="M0.2,1.7 C0.6,-0.3 4.7,-0.4 4.7,2 C4.7,3.6 0.4,5.3 0,7 H5"/><path transform="translate(6.10,0)" d="M0.9,1.5 L2.8,0 V7 M1.3,7 H4.3"/></g>
<g transform="translate(305.80,311.50) rotate(-76) scale(1.000) translate(-2.50,-3.5)" fill="none" stroke="#c4c4c4" stroke-width="0.95" stroke-linecap="round" stroke-linejoin="round"><path transform="translate(0.00,0)" d="M0,0 H5 L1.8,7"/></g>
<line x1="282.0" y1="212.5" x2="380.0" y2="212.5" stroke="#c0c0c0" stroke-width="1" />
<path d="M379.8,213 Q376,275 365,335.2" fill="none" stroke="#c0c0c0" stroke-width="1"/>
<rect x="364" y="268" width="21" height="13" fill="#000"/>
<g transform="translate(374.40,274.80) rotate(0) scale(1.000) translate(-7.15,-3.5)" fill="none" stroke="#c4c4c4" stroke-width="0.95" stroke-linecap="round" stroke-linejoin="round"><path transform="translate(0.00,0)" d="M0.9,1.5 L2.8,0 V7 M1.3,7 H4.3"/><path transform="translate(6.10,0)" d="M3.8,7 V0 L0,4.9 H5.2"/><path transform="translate(12.20,0)" d="M1.2,0 C-0.2,0 -0.2,2.2 1.2,2.2 C2.6,2.2 2.6,0 1.2,0 Z"/></g>
<line x1="121.1" y1="277.6" x2="106.4" y2="334.2" stroke="#c0c0c0" stroke-width="1" />
<line x1="284.9" y1="318.7" x2="270.6" y2="375.2" stroke="#c0c0c0" stroke-width="1" />
<line x1="107.0" y1="331.2" x2="272.2" y2="372.2" stroke="#c0c0c0" stroke-width="1" />
<polygon points="107.0,331.2 111.1,331.3 110.7,333.0" fill="#c0c0c0"/>
<polygon points="272.2,372.2 268.1,372.1 268.5,370.4" fill="#c0c0c0"/>
<g transform="translate(191.50,345.20) rotate(14) scale(1.000) translate(-5.55,-3.5)" fill="none" stroke="#c4c4c4" stroke-width="0.95" stroke-linecap="round" stroke-linejoin="round"><path transform="translate(0.00,0)" d="M4.6,0.8 C3.1,-0.5 0,-0.3 0,3.8 C0,7.6 5,7.6 5,4.7 C5,2.1 1,2.1 0.1,4.2"/><path transform="translate(6.10,0)" d="M0,0 H5 L1.8,7"/></g>
<line x1="222.6" y1="283.5" x2="211.2" y2="330.0" stroke="#c0c0c0" stroke-width="1" />
<line x1="269.2" y1="293.0" x2="257.8" y2="340.0" stroke="#c0c0c0" stroke-width="1" />
<line x1="211.5" y1="327.6" x2="258.0" y2="339.2" stroke="#c0c0c0" stroke-width="1" />
<polygon points="211.5,327.6 215.6,327.7 215.2,329.4" fill="#c0c0c0"/>
<polygon points="258.0,339.2 253.9,339.1 254.3,337.4" fill="#c0c0c0"/>
<g transform="translate(236.10,327.40) rotate(14) scale(1.000) translate(-5.55,-3.5)" fill="none" stroke="#c4c4c4" stroke-width="0.95" stroke-linecap="round" stroke-linejoin="round"><path transform="translate(0.00,0)" d="M0.9,1.5 L2.8,0 V7 M1.3,7 H4.3"/><path transform="translate(6.10,0)" d="M4.9,3 C3.9,4.9 0,4.8 0,2.3 C0,-0.7 5,-0.8 5,3.2 C5,7.3 1.9,7.5 0.4,6.3"/></g>
<line x1="252.5" y1="272.5" x2="246.0" y2="271.0" stroke="#c0c0c0" stroke-width="1" />
<line x1="248.3" y1="271.4" x2="239.7" y2="303.8" stroke="#c0c0c0" stroke-width="1" />
<polygon points="248.2,272.0 248.1,276.1 246.4,275.7" fill="#c0c0c0"/>
<polygon points="240.0,303.0 240.1,298.9 241.8,299.3" fill="#c0c0c0"/>
<g transform="translate(237.50,286.20) rotate(-76) scale(1.000) translate(-5.55,-3.5)" fill="none" stroke="#c4c4c4" stroke-width="0.95" stroke-linecap="round" stroke-linejoin="round"><path transform="translate(0.00,0)" d="M0.9,1.5 L2.8,0 V7 M1.3,7 H4.3"/><path transform="translate(6.10,0)" d="M0.2,0.9 C1.4,-0.4 4.8,-0.1 4.7,1.8 C4.6,3.1 3.2,3.4 2,3.4 C3.6,3.4 5,3.9 5,5.2 C5,7.5 1.1,7.4 0,6.3"/></g>
<line x1="182.0" y1="316.0" x2="222.6" y2="280.8" stroke="#c0c0c0" stroke-width="1" />
<polygon points="214.6,287.5 212.2,290.8 211.0,289.4" fill="#c0c0c0"/>
<g transform="translate(184.80,306.40) rotate(-41) scale(1.000) translate(-5.55,-3.5)" fill="none" stroke="#c4c4c4" stroke-width="0.95" stroke-linecap="round" stroke-linejoin="round"><path transform="translate(0.00,0)" d="M2.5,0.3 C-0.4,0.3 -0.4,6.7 2.5,6.7 C5.4,6.7 5.4,0.3 2.5,0.3 Z M-0.2,7 L5.2,0"/><path transform="translate(6.10,0)" d="M2.5,3.3 C0.2,3.3 0.3,0 2.5,0 C4.7,0 4.8,3.3 2.5,3.3 C-0.1,3.4 -0.1,7 2.5,7 C5.1,7 5.1,3.4 2.5,3.3 Z"/></g>
<g transform="translate(44.00,346.00) rotate(0) scale(1.086) translate(-2.95,-3.5)" fill="none" stroke="#c4c4c4" stroke-width="0.88" stroke-linecap="round" stroke-linejoin="round"><path transform="translate(0.00,0)" d="M0,0 L3,3.8 L6,0 M3,3.8 V7.8"/></g>
<polygon points="42.6,354.6 45.8,362.6 39.4,362.6" fill="none" stroke="#c0c0c0" stroke-width="1"/>
<line x1="42.6" y1="362.6" x2="42.6" y2="391.5" stroke="#c0c0c0"/>
<rect x="39" y="391.5" width="7.4" height="6.5" fill="none" stroke="#c0c0c0"/>
<line x1="46.4" y1="394.8" x2="74.7" y2="394.8" stroke="#c0c0c0"/>
<polygon points="83.1,394.8 74.7,391.6 74.7,398" fill="none" stroke="#c0c0c0"/>
<g transform="translate(92.00,395.00) rotate(0) scale(1.114) translate(-2.70,-3.5)" fill="none" stroke="#c4c4c4" stroke-width="0.85" stroke-linecap="round" stroke-linejoin="round"><path transform="translate(0.00,0)" d="M0,0 L5.5,7.5 M5.5,0 L0,7.5"/></g></g>
<g clip-path="url(#cr)"><path d="M517.7,106.5 L589.4,106.5 L642.8,200.5 L463.9,200.5 Z" fill="none" stroke="#dcdcdc" stroke-width="1"/>
<line x1="482.5" y1="167.5" x2="624.0" y2="167.5" stroke="#dcdcdc" stroke-width="1" />
<line x1="553.5" y1="106.6" x2="553.5" y2="167.4" stroke="#dcdcdc" stroke-width="1" />
<line x1="553.5" y1="167.4" x2="553.5" y2="207.0" stroke="#c8b040" stroke-width="1" />
<line x1="553.5" y1="207.0" x2="553.5" y2="240.0" stroke="#c02020" stroke-width="1" />
<circle cx="553.4" cy="167.5" r="41.5" fill="none" stroke="#dcdcdc" stroke-width="1"/>
<circle cx="553.6" cy="167" r="32" fill="none" stroke="#dcdcdc" stroke-width="1"/>
<line x1="590.5" y1="114.1" x2="590.5" y2="405.7" stroke="#dcdcdc" stroke-width="1" />
<line x1="441.7" y1="262.5" x2="740.0" y2="262.5" stroke="#dcdcdc" stroke-width="1" />
<line x1="553.6" y1="240.0" x2="590.4" y2="240.0" stroke="#5a5a5a" stroke-width="1.5" />
<path d="M464,200.5 Q486,218 514.4,229.2" fill="none" stroke="#dcdcdc" stroke-width="1"/>
<g transform="translate(406.50,345.00) rotate(0) scale(1.086) translate(-2.95,-3.5)" fill="none" stroke="#c4c4c4" stroke-width="0.88" stroke-linecap="round" stroke-linejoin="round"><path transform="translate(0.00,0)" d="M0,0 L3,3.8 L6,0 M3,3.8 V7.8"/></g>
<polygon points="405,354 408.2,362.8 401.8,362.8" fill="none" stroke="#dcdcdc" stroke-width="1"/>
<line x1="405" y1="362.8" x2="405" y2="391.5" stroke="#dcdcdc"/>
<rect x="401.4" y="391.5" width="7" height="6" fill="none" stroke="#dcdcdc"/>
<line x1="408.4" y1="394.5" x2="437.4" y2="394.5" stroke="#dcdcdc"/>
<polygon points="445.5,394.5 437.4,391.3 437.4,397.7" fill="none" stroke="#dcdcdc"/>
<g transform="translate(453.50,394.50) rotate(0) scale(1.114) translate(-2.70,-3.5)" fill="none" stroke="#c4c4c4" stroke-width="0.85" stroke-linecap="round" stroke-linejoin="round"><path transform="translate(0.00,0)" d="M0,0 L5.5,7.5 M5.5,0 L0,7.5"/></g></g>
</svg>
<div class="a" style="left:553.5px;top:206px;width:27.5px;height:11.5px;background:#fff;border:1px solid #aaa"></div>
<div class="a" style="left:554.5px;top:207.3px;width:20.5px;height:9px;background:#3478d8"></div>
<div class="t" style="left:554.8px;top:208px;font-size:7.5px;color:#fff;letter-spacing:-0.5px">9.2208</div>
<div class="a" style="left:565px;top:250.3px;width:14.7px;height:11.1px;background:#1a1a6a;border:1px solid #8a8ab0"></div>
<div class="t" style="left:567px;top:252px;font-size:7px;color:#fff">0°</div>
<div class="a" style="left:603.2px;top:271px;width:65.3px;height:11px;background:#1a1a6a;border:1px solid #9a9ac0"></div>
<div class="t" style="left:605px;top:273px;font-size:7px;color:#fff;letter-spacing:-0.1px">正交: 11.1962 &lt; 0°</div>
<div class="a" style="left:0px;top:419px;width:776px;height:46px;background:#f0f0f0"></div>
<div class="a" style="left:0px;top:422px;width:776px;height:1px;background:#8c8c8c"></div>
<div class="a" style="left:2px;top:427px;width:4px;height:24px;background:#e4e4e4;border-left:1px solid #fff;border-right:1px solid #c0c0c0"></div>
<div class="a" style="left:6.5px;top:427.5px;width:764px;height:24px;background:#fff;border-left:1px solid #a0a0a0;border-top:1px solid #a0a0a0"></div>
<div class="a" style="left:7px;top:440.5px;width:758px;height:1px;background:#e8e8e8"></div>
<div class="t" style="left:8px;top:429.3px;font-size:8px;color:#222;letter-spacing:0.65px">指定圆弧的第二个点或</div>
<div class="t" style="left:101px;top:429.3px;color:#222;font-family:Liberation Mono,monospace;font-size:7.5px">[</div>
<div class="t" style="left:104.2px;top:429.3px;color:#222;font-size:8px;letter-spacing:0.3px">圆心</div>
<div class="t" style="left:122.9px;top:430.2px;color:#222;font-family:Liberation Serif,serif;font-size:6.5px">(C)</div>
<div class="t" style="left:133.6px;top:429.3px;color:#222;font-family:Liberation Mono,monospace;font-size:7.5px">/</div>
<div class="t" style="left:138.3px;top:429.3px;color:#222;font-size:8px;letter-spacing:0.3px">端点</div>
<div class="t" style="left:157px;top:430.2px;color:#222;font-family:Liberation Serif,serif;font-size:6.5px">(E)</div>
<div class="t" style="left:168.6px;top:429.3px;color:#222;font-family:Liberation Mono,monospace;font-size:7.5px">]</div>
<div class="t" style="left:172.5px;top:429.3px;color:#222;font-family:Liberation Mono,monospace;font-size:7.5px">:</div>
<div class="t" style="left:8px;top:443px;font-size:8px;color:#222"><span style="letter-spacing:0.65px">指定圆弧的端点</span><span style="font-family:Liberation Mono,monospace;font-size:7.5px">:</span></div>
<div class="a" style="left:765px;top:427.5px;width:11px;height:24px;background:#f0f0f0"></div>
<svg class="a" style="left:768.5px;top:429.5px" width="7" height="12" viewBox="0 0 7 12"><path d="M0.5,3.8 L3.5,1 L6.5,3.8 M0.5,7.2 L3.5,10 L6.5,7.2" fill="none" stroke="#555" stroke-width="0.9"/></svg>
<div class="a" style="left:0px;top:451.5px;width:776px;height:13.5px;background:#f0f0f0"></div>
<div class="a" style="left:0px;top:452px;width:776px;height:0.8px;background:#c4c4c4"></div>
<div class="a" style="left:2px;top:454px;width:99.5px;height:10.5px;background:#f0f0f0;border-top:1px solid #a0a0a0;border-left:1px solid #a0a0a0;border-bottom:1px solid #fff;border-right:1px solid #fff"></div>
<div class="t" style="left:2.6px;top:456.3px;font-size:7px;color:#222;font-family:Liberation Mono,monospace;letter-spacing:-0.98px">181.2143, 138.4540, 0.0000</div>
<div class="a" style="left:118.9px;top:454.5px;width:0.8px;height:10px;background:#d4d4d4"></div>
<div class="t" style="left:105px;width:13.400000000000006px;text-align:center;top:456.6px;font-size:6.9px;color:#000;letter-spacing:0px;-webkit-text-stroke:0.15px #000">捕捉</div>
<div class="a" style="left:135.5px;top:454.5px;width:0.8px;height:10px;background:#d4d4d4"></div>
<div class="t" style="left:121px;width:14px;text-align:center;top:456.6px;font-size:6.9px;color:#000;letter-spacing:0px;-webkit-text-stroke:0.15px #000">栅格</div>
<div class="a" style="left:139px;top:454.6px;width:15.5px;height:9.9px;background:#fff;border:1px solid #a8a8a8;border-top-color:#6a6a6a;border-left-color:#6a6a6a"></div>
<div class="t" style="left:139px;width:15.5px;text-align:center;top:456.6px;font-size:6.9px;color:#000;letter-spacing:0px;-webkit-text-stroke:0.15px #000">正交</div>
<div class="a" style="left:171.5px;top:454.5px;width:0.8px;height:10px;background:#d4d4d4"></div>
<div class="t" style="left:157px;width:14px;text-align:center;top:456.6px;font-size:6.9px;color:#000;letter-spacing:0px;-webkit-text-stroke:0.15px #000">极轴</div>
<div class="a" style="left:174px;top:454.6px;width:30px;height:9.9px;background:#fff;border:1px solid #a8a8a8;border-top-color:#6a6a6a;border-left-color:#6a6a6a"></div>
<div class="t" style="left:174px;width:30px;text-align:center;top:456.9px;font-size:6.5px;color:#000;letter-spacing:0px;-webkit-text-stroke:0.15px #000">对象捕捉</div>
<div class="a" style="left:204.3px;top:454.6px;width:28.299999999999983px;height:9.9px;background:#fff;border:1px solid #a8a8a8;border-top-color:#6a6a6a;border-left-color:#6a6a6a"></div>
<div class="t" style="left:204.3px;width:28.299999999999983px;text-align:center;top:456.9px;font-size:6.5px;color:#000;letter-spacing:0px;-webkit-text-stroke:0.15px #000">对象追踪</div>
<div class="a" style="left:234.5px;top:454.6px;width:16.0px;height:9.9px;background:#fff;border:1px solid #a8a8a8;border-top-color:#6a6a6a;border-left-color:#6a6a6a"></div>
<div class="t" style="left:234.5px;width:16.0px;text-align:center;top:457.2px;font-size:5.8px;color:#222;font-family:Liberation Serif,serif;letter-spacing:0px">DUCS</div>
<div class="a" style="left:252px;top:454.6px;width:12px;height:9.9px;background:#fff;border:1px solid #a8a8a8;border-top-color:#6a6a6a;border-left-color:#6a6a6a"></div>
<div class="t" style="left:252px;width:12px;text-align:center;top:457.2px;font-size:5.8px;color:#222;font-family:Liberation Serif,serif;letter-spacing:0px">DYN</div>
<div class="a" style="left:281.5px;top:454.5px;width:0.8px;height:10px;background:#d4d4d4"></div>
<div class="t" style="left:266px;width:15px;text-align:center;top:456.6px;font-size:6.9px;color:#000;letter-spacing:0px;-webkit-text-stroke:0.15px #000">线宽</div>
<div class="a" style="left:283px;top:454.6px;width:16px;height:9.9px;background:#fff;border:1px solid #a8a8a8;border-top-color:#6a6a6a;border-left-color:#6a6a6a"></div>
<div class="t" style="left:283px;width:16px;text-align:center;top:456.6px;font-size:6.9px;color:#000;letter-spacing:0px;-webkit-text-stroke:0.15px #000">模型</div>
<svg class="a" style="left:738.5px;top:458px" width="8" height="7" viewBox="0 0 8 7"><path d="M4,0.5 L7.5,6.5 L0.5,6.5 Z" fill="#f2c200" stroke="#a08000" stroke-width="0.5"/><path d="M0,0 L6,6 M6,0 L0,6" stroke="#3a6ab0" stroke-width="0.8"/></svg>
<svg class="a" style="left:748px;top:456px" width="9" height="8" viewBox="0 0 9 8"><rect x="0.5" y="3.5" width="6" height="4.5" fill="#e6b800" stroke="#8a6a00" stroke-width="0.5"/><path d="M4,3.5 V1.8 A2,2 0 0 1 8,1.8 V3" fill="none" stroke="#8a6a00" stroke-width="1"/></svg>
<svg class="a" style="left:761.5px;top:460px" width="5" height="3" viewBox="0 0 5 3"><path d="M0,0 L5,0 L2.5,3 Z" fill="#000"/></svg>
<div class="a" style="left:770px;top:455px;width:6px;height:9px;background:#b8d0ea;border:1px solid #5a80b0"></div>
<div class="a" style="left:0px;top:465px;width:776px;height:18px;background:#1c2130"></div>
<div class="a" style="left:307px;top:465px;width:86.5px;height:18px;background:#3b4150"></div>
<svg class="a" style="left:6.4px;top:471.4px" width="9.6" height="9.2" viewBox="0 0 9.6 9.2"><path d="M0,1.3 L4.3,0.7 V4.3 H0 Z M4.9,0.6 L9.6,0 V4.3 H4.9 Z M0,4.9 H4.3 V8.5 L0,7.9 Z M4.9,4.9 H9.6 V9.2 L4.9,8.6 Z" fill="#fff"/></svg>
<svg class="a" style="left:33.5px;top:469.5px" width="11" height="11" viewBox="0 0 11 11"><path d="M10.5,6.5 H2.5 C2.8,9 6.5,10.5 10,8.8 V10.3 C5.5,12 0.5,10 0.5,5.5 C0.5,2 3,0 6,0 C9,0 10.8,2.5 10.5,6.5 Z M2.8,4.3 H7.8 C7.6,2.5 6.2,1.6 5,1.7 C3.8,1.8 3,2.8 2.8,4.3 Z" fill="#1e90e8"/></svg>
<svg class="a" style="left:60.3px;top:468.5px" width="10.5" height="14" viewBox="0 0 10.5 14"><ellipse cx="5.2" cy="5" rx="3.8" ry="4.5" fill="#111"/><ellipse cx="5.2" cy="9" rx="4" ry="4" fill="#111"/><ellipse cx="5.2" cy="9.5" rx="2.8" ry="3" fill="#fff"/><path d="M1.5,7 Q5.2,9 9,7 L8.5,8.5 Q5.2,10 2,8.5 Z" fill="#e02020"/><path d="M3,7.3 L5.2,6.3 L7.4,7.3 Z" fill="#f0b000"/><ellipse cx="3" cy="13" rx="2" ry="0.9" fill="#f0a000"/><ellipse cx="7.4" cy="13" rx="2" ry="0.9" fill="#f0a000"/></svg>
<svg class="a" style="left:85px;top:467.8px" width="13" height="13.5" viewBox="0 0 13 13.5"><path d="M0.5,0.5 L6,6" stroke="#1e3cc8" stroke-width="1.5"/><path d="M5.5,5.5 L9.5,9.5 L7.5,11.5 L3.5,7.5 Z" fill="#f0b030"/><path d="M9.5,9.5 L12.5,12.5" stroke="#1e3cc8" stroke-width="1.5"/></svg>
<svg class="a" style="left:112px;top:467.8px" width="13.6" height="13" viewBox="0 0 13.6 13"><ellipse cx="5" cy="5" rx="5" ry="4.2" fill="#4cc040"/><path d="M2,8 L1.5,10 L4,8.5 Z" fill="#4cc040"/><ellipse cx="9.3" cy="8.4" rx="4.2" ry="3.5" fill="#e8e8e8"/><circle cx="3.3" cy="4" r="0.7" fill="#fff"/><circle cx="6.7" cy="4" r="0.7" fill="#fff"/></svg>
<svg class="a" style="left:139.2px;top:469.5px" width="7.6" height="11" viewBox="0 0 7.6 11"><path d="M0,0 H3.5 L4.5,1.5 H7.6 V11 H0 Z" fill="#f0c040"/><rect x="1" y="2" width="6.6" height="9" fill="#f8d878"/></svg>
<div class="t" style="left:152.6px;top:470.5px;font-size:7.3px;color:#fff">第 5 课</div>
<svg class="a" style="left:226.3px;top:468.5px" width="11" height="13" viewBox="0 0 11 13"><rect x="0" y="0" width="11" height="13" fill="#f4f4f4" rx="0.5"/><circle cx="3.5" cy="8" r="1.6" fill="#f07020"/><rect x="7.8" y="3" width="1.3" height="8" fill="#f07020"/></svg>
<div class="t" style="left:240.5px;top:471.3px;font-size:7.3px;color:#fff">ocam</div>
<svg class="a" style="left:313px;top:468.5px" width="13" height="13" viewBox="0 0 13 13"><rect x="0" y="0" width="13" height="13" fill="#2a9a9a"/><rect x="1" y="1" width="11" height="11" fill="#bfe6e6"/><path d="M2.5,11 L5.5,2 L8,11 M10,3 V10 Q10,11.5 7,11" stroke="#1a6a6a" stroke-width="1.1" fill="none"/></svg>
<div class="t" style="left:328.3px;top:471.3px;font-size:7.3px;color:#fff;letter-spacing:-0.1px">AutoCAD 2007</div>
<svg class="a" style="left:402px;top:468.5px" width="10" height="13" viewBox="0 0 10 13"><path d="M0,0 H7 L10,3 V13 H0 Z" fill="#fff"/><path d="M7,0 V3 H10" fill="#ddd"/><path d="M2.5,10 Q5,3 5,4 Q4.5,8 8,9 Q5,9 2.5,10 Z" fill="none" stroke="#d02020" stroke-width="0.9"/></svg>
<div class="t" style="left:416px;top:471.3px;font-size:7.2px;color:#fff;letter-spacing:-0.3px">CAD最新教程 200...</div>
<div class="t" style="left:604px;top:471px;font-size:6.8px;color:#fff">桌面</div>
<div class="t" style="left:621.5px;top:466.5px;font-size:7px;color:#fff">»</div>
<svg class="a" style="left:634px;top:473px" width="6" height="4" viewBox="0 0 6 4"><path d="M0.5,3.5 L3,0.8 L5.5,3.5" fill="none" stroke="#fff" stroke-width="0.9"/></svg>
<svg class="a" style="left:646px;top:470.5px" width="5" height="9" viewBox="0 0 5 9"><rect x="1" y="0" width="3" height="6" rx="1.5" fill="#fff"/><path d="M0.3,4.5 Q2.5,8 4.7,4.5 M2.5,6.8 V9" stroke="#fff" stroke-width="0.7" fill="none"/></svg>
<svg class="a" style="left:660px;top:470.5px" width="7.5" height="8" viewBox="0 0 7.5 8"><path d="M0.5,7.5 A7,7 0 0 1 7,1 M2.5,7.5 A5,5 0 0 1 7,3 M4.5,7.5 A3,3 0 0 1 7,5" stroke="#ccc" stroke-width="0.8" fill="none"/><circle cx="6.5" cy="7" r="0.8" fill="#fff"/></svg>
<svg class="a" style="left:670px;top:471px" width="10" height="8" viewBox="0 0 10 8"><path d="M0.5,2.5 H2.5 L5,0.5 V7.5 L2.5,5.5 H0.5 Z" fill="#fff"/><path d="M6.5,2 Q7.8,4 6.5,6 M8,1 Q10,4 8,7" stroke="#fff" stroke-width="0.8" fill="none"/></svg>
<svg class="a" style="left:686px;top:471px" width="7" height="7" viewBox="0 0 7 7"><circle cx="3.5" cy="3.5" r="3" fill="none" stroke="#ccc" stroke-width="0.9"/><path d="M2,2 L5,5 M5,2 L2,5" stroke="#ccc" stroke-width="0.9"/></svg>
<svg class="a" style="left:698px;top:469.5px" width="9.5" height="10" viewBox="0 0 9.5 10"><path d="M8,2 Q5,0 2.5,1.5 Q0.5,3 3,4.8 L6,5.5 Q8.5,6.5 6.5,8.3 Q4,10 1,8" stroke="#e8ffe8" stroke-width="3.4" fill="none"/><path d="M8,2 Q5,0 2.5,1.5 Q0.5,3 3,4.8 L6,5.5 Q8.5,6.5 6.5,8.3 Q4,10 1,8" stroke="#1fb02a" stroke-width="2.2" fill="none"/></svg>
<div class="t" style="left:719px;top:468px;font-size:7px;color:#fff">11:26:03</div>
<div class="t" style="left:716px;top:477.8px;font-size:7.1px;color:#fff">2019/9/28</div>
<svg class="a" style="left:759px;top:469px" width="12" height="12" viewBox="0 0 12 12"><rect x="0.5" y="0.5" width="9" height="7" fill="none" stroke="#fff" stroke-width="0.9"/><path d="M2,8 L2,10 L4,8" fill="#fff"/><path d="M2,3 H8 M2,5 H7" stroke="#fff" stroke-width="0.7"/><circle cx="9" cy="9" r="2.8" fill="#1c2130" stroke="#fff" stroke-width="0.6"/><text x="9" y="10.8" font-size="4.5" fill="#fff" text-anchor="middle" font-family="Liberation Sans">3</text></svg>
<svg class="a" style="left:0;top:0" width="776" height="483" viewBox="0 0 776 483"><defs><linearGradient id="rb"><stop offset="0" stop-color="#f00"/><stop offset="0.3" stop-color="#f0f"/><stop offset="0.5" stop-color="#00f"/><stop offset="0.7" stop-color="#0f0"/><stop offset="1" stop-color="#fa0"/></linearGradient></defs><g transform="translate(5.80,24.30) scale(1.0)"><path d="M0.5,1 H7 L9.5,3.5 V9 H0.5 Z" fill="#c8def0" stroke="#6a98c0" stroke-width="0.8"/><path d="M7,1 V3.5 H9.5" fill="#e8f2fa" stroke="#6a98c0" stroke-width="0.6"/></g>
<g transform="translate(18.50,24.30) scale(1.0)"><path d="M0.5,2 H4 L5,3 H9 V9 H0.5 Z" fill="#e0b030"/><path d="M2,4 H9.5 L8,9 H0.5 Z" fill="#f6d458"/><path d="M6,6 L8.5,8.5 M8.5,6.5 V8.5 H6.5" stroke="#1a3a8a" stroke-width="1.2" fill="none"/></g>
<g transform="translate(31.00,24.30) scale(1.0)"><rect x="0.5" y="1" width="8" height="8" fill="#3a70c0"/><rect x="2" y="1.5" width="5" height="3" fill="#e8f0fa"/><rect x="2.5" y="6" width="4" height="3" fill="#d0e0f0"/></g>
<g transform="translate(46.50,24.30) scale(1.0)"><rect x="1" y="3" width="8" height="4" rx="1" fill="#9098b8"/><rect x="2.5" y="0.5" width="5" height="3" fill="#e8e8f0" stroke="#8088a0" stroke-width="0.5"/><rect x="2.5" y="6" width="5" height="3.5" fill="#d8dce8" stroke="#7078a0" stroke-width="0.5"/></g>
<g transform="translate(59.50,24.30) scale(1.0)"><rect x="0.5" y="0.5" width="8.5" height="7.5" fill="#d8e8f6" stroke="#3a6ab0" stroke-width="0.9"/><circle cx="5" cy="5" r="2.3" fill="#b8d4ee" stroke="#3a6ab0" stroke-width="0.8"/><path fill="none" d="M3.3,6.8 L1,9.5" stroke="#b07030" stroke-width="1.2"/></g>
<g transform="translate(72.50,24.30) scale(1.0)"><circle cx="3.5" cy="4" r="3" fill="#e8c030"/><circle cx="6.5" cy="4.5" r="3" fill="#40a0c8" opacity="0.85"/><ellipse cx="5" cy="8.3" rx="3.8" ry="1.5" fill="none" stroke="#8090b0" stroke-width="0.9"/></g>
<g transform="translate(84.50,24.30) scale(1.0)"><circle cx="5" cy="4.8" r="4" fill="#3a88c8"/><path d="M2,3 Q4,1.5 5,3 Q6,5 8,4 M3,6 Q5,8 7,6.5" stroke="#e8c030" stroke-width="1.2" fill="none"/><path d="M1,6 Q2,10 6,9.5" stroke="#8aa0c0" stroke-width="0.8" fill="none"/></g>
<g transform="translate(100.50,24.30) scale(1.0)"><path d="M0.5,5 H6 M4,2 L8,7 M4,8 L8,3" stroke="#2a3868" stroke-width="1.1" fill="none"/><circle cx="8" cy="2.5" r="1.2" fill="none" stroke="#2a3868" stroke-width="0.8"/><circle cx="8" cy="7.5" r="1.2" fill="none" stroke="#2a3868" stroke-width="0.8"/></g>
<g transform="translate(112.50,24.30) scale(1.0)"><rect x="0.5" y="1" width="6.5" height="7" fill="#c8dcee" stroke="#5a88b8" stroke-width="0.7"/><rect x="2.5" y="2.5" width="7" height="7" fill="#d8e8f6" stroke="#5a88b8" stroke-width="0.7"/></g>
<g transform="translate(125.50,24.30) scale(1.0)"><path d="M1.5,3 Q5,0.5 8.5,3 L9,7 Q5,10 1,7 Z" fill="#e6c860" stroke="#a08020" stroke-width="0.6"/><rect x="2.5" y="3" width="5" height="4.5" fill="#c0d8ee"/><path d="M4,1 Q5,0 6,1" stroke="#777" stroke-width="0.8" fill="none"/></g>
<g transform="translate(138.00,24.30) scale(1.0)"><path fill="none" d="M1,9 L7,3" stroke="#222" stroke-width="2"/><path fill="none" d="M7,3 L9,1" stroke="#e09040" stroke-width="2"/></g>
<g transform="translate(150.50,24.30) scale(1.0)"><path fill="none" d="M3,7 L8,1.5" stroke="#e8b020" stroke-width="2.5"/><circle cx="2.5" cy="7.5" r="2" fill="#f07040"/><path fill="none" d="M0.5,9.5 L2,8" stroke="#2060c0" stroke-width="1.5"/></g>
<g transform="translate(166.50,24.30) scale(1.0)"><path d="M7.5,2 Q3,1.5 2.5,6 M0.5,4.5 L2.5,8.5 L4.5,5" stroke="#b8b8b8" stroke-width="1.3" fill="none"/></g>
<g transform="translate(176.00,24.30) scale(1.0)"><path d="M3.5,5 H6.5 L5,6.5 Z" fill="#aaa"/></g>
<g transform="translate(188.50,24.30) scale(1.0)"><path d="M2.5,2 Q7,1.5 7.5,6 M5.5,5 L7.5,8.5 L9.5,4.5" stroke="#b8b8b8" stroke-width="1.3" fill="none"/></g>
<g transform="translate(196.00,24.30) scale(1.0)"><path d="M3.5,5 H6.5 L5,6.5 Z" fill="#aaa"/></g>
<g transform="translate(208.50,24.30) scale(1.0)"><path d="M1,3 Q3,1 5.5,3 L6,7 Q4,9 1.5,7 Z" fill="#d8a0a0"/><path d="M6.5,0.5 L8,2 L6.5,3.5 Z M6.5,7 L9,7 L8,9.5 L5.5,9 Z" fill="#2a5a98"/></g>
<g transform="translate(220.50,24.30) scale(1.0)"><circle cx="4" cy="4" r="3.2" fill="#d8e8f8" stroke="#606878" stroke-width="0.9"/><path fill="none" d="M6,6 L9,9.5" stroke="#c08030" stroke-width="1.5"/><path fill="none" d="M7.5,1.5 H9.5 M7.5,3.5 H9.5" stroke="#2a5a98" stroke-width="0.8"/></g>
<g transform="translate(233.50,24.30) scale(1.0)"><circle cx="4.2" cy="4.2" r="3.4" fill="#98b8e0" stroke="#406090" stroke-width="0.9"/><path fill="none" d="M6.5,6.5 L9,9" stroke="#c08030" stroke-width="1.5"/><rect x="8" y="8" width="2" height="2" fill="#000"/></g>
<g transform="translate(245.50,24.30) scale(1.0)"><circle cx="4.2" cy="4.2" r="3.4" fill="#d8e8f8" stroke="#606878" stroke-width="0.9"/><path d="M2.5,5 Q5,1 8.5,1.5" stroke="#1a3a88" stroke-width="1.6" fill="none"/><path fill="none" d="M6.5,6.5 L9,9.5" stroke="#c08030" stroke-width="1.5"/></g>
<g transform="translate(261.50,24.30) scale(1.0)"><rect x="0.5" y="0.5" width="7" height="2.5" fill="url(#rb)"/><path fill="none" d="M1,4 L7,8 M2,8 L8,3" stroke="#e0a0a0" stroke-width="1"/><path fill="none" d="M7,3 L8.5,9.5 M9.5,3 L6.5,9.5" stroke="#203050" stroke-width="1.2"/></g>
<g transform="translate(274.50,24.30) scale(1.0)"><rect x="0.5" y="0.5" width="9" height="9" fill="#e8f0f8" stroke="#2a4a88" stroke-width="1"/><path fill="none" d="M4,1 V9 M1,3.5 H9 M1,6 H9" stroke="#2a4a88" stroke-width="0.8"/><path fill="none" d="M2.3,2 V8" stroke="#70a040" stroke-width="0.8"/></g>
<g transform="translate(286.50,24.30) scale(1.0)"><rect x="0.5" y="0.5" width="6" height="9" fill="#e8f0f8" stroke="#2a4a88" stroke-width="1"/><path fill="none" d="M2,3 H5 M2,5 H5 M2,7 H5" stroke="#2a4a88" stroke-width="0.8"/><path fill="none" d="M6,3 L9.5,8" stroke="#2a4a88" stroke-width="1.4"/><circle cx="9" cy="8.5" r="1" fill="#c0a040"/></g>
<g transform="translate(298.50,24.30) scale(1.0)"><path d="M0.5,5 L6,1.5 L9.5,3 L9.5,9 L4,9 Z" fill="#5a90c0"/><path d="M0.5,4 L6,1 L8,2 L3,6 Z" fill="#e0e0e0"/><path fill="none" d="M1,6 H8" stroke="#c0c0c0" stroke-width="0.8"/></g>
<g transform="translate(312.00,24.30) scale(1.0)"><rect x="2" y="3" width="7.5" height="6.5" fill="#a0a0a0"/><rect x="1" y="0.5" width="7" height="7" fill="#fff" stroke="#d03030" stroke-width="1"/><path fill="none" d="M2.5,2 L6.5,6 M6.5,2 L2.5,6" stroke="#e04040" stroke-width="1.3"/></g>
<g transform="translate(324.50,24.30) scale(1.0)"><rect x="1.5" y="0.5" width="7" height="9" fill="#202020"/><rect x="2.5" y="1.2" width="5" height="1.8" fill="#70a070"/><path fill="none" d="M3,5 H4 M6,5 H7 M3,7.5 H4 M6,7.5 H7" stroke="#e8e8e8" stroke-width="1"/><rect x="2.5" y="4" width="5" height="0.5" fill="#d04040"/></g>
<g transform="translate(340.00,24.30) scale(1.0)"><rect x="0.5" y="0.5" width="9" height="9" fill="#2a64b8"/><text x="5" y="8.3" font-size="8" font-weight="bold" fill="#fff" text-anchor="middle" font-family="Liberation Sans">?</text></g>
<g transform="translate(361.50,24.30) scale(1.0)"><text x="4" y="8" font-size="10" font-weight="bold" font-style="italic" fill="#111" text-anchor="middle" font-family="Liberation Serif">A</text><path d="M1,9 Q5,6 9,8" stroke="#111" stroke-width="0.9" fill="none"/><circle cx="8.5" cy="5" r="1" fill="#d08040"/></g>
<g transform="translate(432.00,24.30) scale(1.0)"><path fill="none" d="M0.5,9 H9 M1.5,7 V9.5 M8,7 V9.5" stroke="#111" stroke-width="1.2"/><path fill="none" d="M1,7.5 L8,1.5" stroke="#222" stroke-width="1.8"/><path fill="none" d="M7,2.5 L9,0.5" stroke="#d08040" stroke-width="1.5"/></g>
<g transform="translate(502.50,24.30) scale(1.0)"><rect x="0.5" y="2" width="8.5" height="7.5" fill="#6a98d0" stroke="#2a5090" stroke-width="0.7"/><path fill="none" d="M1,5 H9 M1,7 H9 M4,5 V9.5" stroke="#e0ecf8" stroke-width="0.7"/><path fill="none" d="M2,6 L8.5,1" stroke="#111" stroke-width="1.5"/><circle cx="9" cy="1" r="0.9" fill="#d08040"/></g>
<g transform="translate(101.30,38.60) scale(1.0)"><rect x="0" y="0.5" width="9.5" height="9" fill="#3a6aa8"/><circle cx="4.75" cy="5" r="3.2" fill="#e8e8e8" stroke="#333" stroke-width="0.9"/><circle cx="4.75" cy="5" r="1.2" fill="#3a6aa8"/></g>
<g transform="translate(113.40,38.60) scale(1.0)"><rect x="0" y="0.5" width="9.5" height="9" fill="#d8d8d8"/><path d="M1,9.5 V4.5 L4.75,1.5 L8.5,4.5 V9.5 Z" fill="#111"/></g>
<g transform="translate(136.00,38.60) scale(1.0)"><path d="M5,1 L9.5,3 L5,5 L0.5,3 Z" fill="#8ab8e0"/><path d="M0.5,5 L5,7 L9.5,5 M0.5,7 L5,9 L9.5,7" stroke="#8aa8d0" stroke-width="1" fill="none"/></g>
<g transform="translate(149.30,39.60) scale(0.8)"><circle cx="5" cy="3.7" r="2.8" fill="#fff8c0" stroke="#a09040" stroke-width="0.7"/><rect x="3.8" y="6.2" width="2.4" height="3" fill="#5a70a0"/></g>
<g transform="translate(158.50,39.60) scale(0.8)"><circle cx="5" cy="5" r="4" fill="#f0d020" stroke="#607040" stroke-width="0.9"/></g>
<g transform="translate(168.00,39.60) scale(0.8)"><circle cx="4.5" cy="4.5" r="3.5" fill="#9abce0" stroke="#6a8ab0" stroke-width="0.6"/><rect x="3" y="5" width="6.5" height="4.5" fill="#d0e0f0" stroke="#6a8ab0" stroke-width="0.6"/></g>
<g transform="translate(176.50,39.60) scale(0.8)"><path d="M2.5,5 V3 A2.2,2.2 0 0 1 7,3" stroke="#c8c020" stroke-width="1.2" fill="none"/><rect x="3" y="4.5" width="6" height="5" fill="#e8d820" stroke="#707020" stroke-width="0.6"/></g>
<g transform="translate(186.50,39.60) scale(0.8)"><rect x="1" y="1.5" width="7" height="7" fill="#fff" stroke="#111" stroke-width="1.2"/></g>
<g transform="translate(311.50,38.60) scale(1.0)"><path d="M1,4 Q5,0.5 9,4 Q5,7 1,4 Z" fill="#5a90c8"/><path d="M0.5,7 Q5,4.5 9.5,7 Q5,10 0.5,7 Z" fill="#e8c030"/><path fill="none" d="M1,9.5 L3,7.5" stroke="#2a4a88" stroke-width="1"/></g>
<g transform="translate(324.50,38.60) scale(1.0)"><path d="M1,5 Q5,1.5 9,5 Q5,8 1,5 Z" fill="#5a90c8"/><path d="M1,7.5 Q5,5 9,7.5 Q5,10 1,7.5 Z" fill="#8ab0d8"/><path d="M3,0.5 L6,2.5 L3,4" stroke="#1a3a88" stroke-width="1.2" fill="none"/></g>
<g transform="translate(0.30,58.70) scale(1.0)"><path fill="none" d="M1.5,8.5 L8.5,1.5" stroke="#1a3a78" stroke-width="1"/><circle cx="1.5" cy="8.5" r="1.1" fill="#2a7ae0"/><circle cx="8.5" cy="1.5" r="1.1" fill="#2a7ae0"/></g>
<g transform="translate(0.30,70.60) scale(1.0)"><path fill="none" d="M0.5,9.5 L9.5,0.5" stroke="#222" stroke-width="1"/><circle cx="5" cy="5" r="1.2" fill="#2a7ae0"/><circle cx="8" cy="2" r="0.9" fill="#2a7ae0"/></g>
<g transform="translate(0.30,82.50) scale(1.0)"><path d="M0.5,7.5 H5.5 Q8.5,7.5 8.5,5 Q8.5,2.5 5.5,2.5" stroke="#1a5ab8" stroke-width="1.1" fill="none"/><circle cx="0.8" cy="7.5" r="0.9" fill="#2a7ae0"/><circle cx="5.5" cy="2.5" r="0.9" fill="#2a7ae0"/></g>
<g transform="translate(0.30,94.40) scale(1.0)"><path d="M5,1 L9,4 L7.5,8.8 H2.5 L1,4 Z" fill="#dde8f4" stroke="#333" stroke-width="0.9"/></g>
<g transform="translate(0.30,106.30) scale(1.0)"><rect x="0.5" y="2.5" width="9" height="5" fill="#d8e6f4" stroke="#333" stroke-width="0.9"/><circle cx="9" cy="2.5" r="0.9" fill="#2a7ae0"/><circle cx="1" cy="7.5" r="0.9" fill="#2a7ae0"/></g>
<g transform="translate(0.30,118.20) scale(1.0)"><path d="M1,9 Q1,2 8.5,1.5" stroke="#1a4a98" stroke-width="1.1" fill="none"/><circle cx="1" cy="9" r="0.9" fill="#2a7ae0"/><circle cx="8.5" cy="1.5" r="0.9" fill="#2a7ae0"/></g>
<g transform="translate(0.30,130.10) scale(1.0)"><circle cx="5" cy="5" r="3.8" fill="#f4f8fc" stroke="#333" stroke-width="1"/><path fill="none" d="M5,5 L7.3,2.7" stroke="#1a4a98" stroke-width="0.9"/><circle cx="5" cy="5" r="0.9" fill="#2a7ae0"/></g>
<g transform="translate(0.30,142.00) scale(1.0)"><path d="M2,2 Q4,0 6,1.5 Q9,1 9,4.5 Q10,7.5 7,8.5 Q5,10 3,8 Q0,8 1,5 Q-0.5,3 2,2 Z" fill="#c8d8ea" stroke="#444" stroke-width="0.9"/></g>
<g transform="translate(0.30,153.90) scale(1.0)"><path d="M0.5,8 Q2,2 4.5,5 Q7,8 9.5,2" stroke="#333" stroke-width="0.9" fill="none"/></g>
<g transform="translate(0.30,165.80) scale(1.0)"><ellipse cx="5" cy="5" rx="4.2" ry="2.8" fill="#eef4fa" stroke="#1a3a78" stroke-width="1"/><circle cx="5" cy="2.2" r="0.8" fill="#2a7ae0"/></g>
<g transform="translate(0.30,177.70) scale(1.0)"><path d="M0.8,5 A4.2,2.8 0 1 1 5,7.8" stroke="#1a3a78" stroke-width="1" fill="none"/><circle cx="5" cy="7.8" r="1" fill="#2a7ae0"/></g>
<g transform="translate(0.30,189.60) scale(1.0)"><path d="M3,1 H9 V6 H3 Z" fill="#e0e8f0" stroke="#6a7a90" stroke-width="0.6"/><path d="M0.5,4 H6 V8.5 H0.5 Z" fill="#f0d040" stroke="#806020" stroke-width="0.6"/><path d="M5,6 H9.5 V9.5 H5 Z" fill="#e0c030"/></g>
<g transform="translate(0.30,201.50) scale(1.0)"><path d="M1,2 H6 V6.5 H1 Z" fill="#3a70b8"/><path d="M4,4.5 H9 V9 H4 Z" fill="#f0d040" stroke="#806020" stroke-width="0.6"/></g>
<g transform="translate(0.30,213.40) scale(1.0)"><circle cx="5" cy="5" r="0.9" fill="#2a7ae0"/></g>
<g transform="translate(0.30,225.30) scale(1.0)"><rect x="1" y="1" width="8" height="8" fill="#dde8f4" stroke="#2a5a98" stroke-width="1"/><path fill="none" d="M1,5 L5,1 M1,9 L9,1 M5,9 L9,5" stroke="#2a5a98" stroke-width="0.9"/></g>
<g transform="translate(0.30,237.20) scale(1.0)"><rect x="1" y="1" width="8" height="8" fill="#4a6a4a" stroke="#222" stroke-width="1"/><path fill="none" d="M1,9 L9,1" stroke="#a0b070" stroke-width="1.5"/></g>
<g transform="translate(0.30,249.10) scale(1.0)"><path d="M1,3 L4,1 H9 V8.5 H1 Z" fill="#f0f6fc" stroke="#2a5a98" stroke-width="1"/><circle cx="6" cy="6" r="2" fill="none" stroke="#2a5a98" stroke-width="0.9"/></g>
<g transform="translate(0.30,261.00) scale(1.0)"><rect x="0.5" y="1" width="9" height="8" fill="#e8f0fa" stroke="#2a5a98" stroke-width="0.9"/><rect x="0.5" y="1" width="9" height="2" fill="#5a8ad0"/><path fill="none" d="M3.5,3 V9 M6.5,3 V9 M0.5,6 H9.5" stroke="#2a5a98" stroke-width="0.7"/></g>
<g transform="translate(0.30,272.90) scale(1.0)"><text x="5" y="9.5" font-size="10.5" font-weight="bold" fill="#111" text-anchor="middle" font-family="Liberation Sans">A</text></g>
<g transform="translate(13.60,58.70) scale(1.0)"><path d="M2,7.5 L8,1.5 L9.5,3 L3.5,9 Z" fill="#f0c040" stroke="#906020" stroke-width="0.5"/><path d="M2,7.5 L3.5,9 L1.5,9.5 Z" fill="#e07050"/><path fill="none" d="M0.5,9.5 H9.5" stroke="#333" stroke-width="0.7"/></g>
<g transform="translate(13.60,70.60) scale(1.0)"><circle cx="3.5" cy="3" r="2.4" fill="none" stroke="#333" stroke-width="0.9"/><circle cx="6.5" cy="7" r="2.4" fill="none" stroke="#333" stroke-width="0.9"/><circle cx="5.8" cy="1.8" r="1" fill="#2a7ae0"/></g>
<g transform="translate(13.60,82.50) scale(1.0)"><path d="M4,1 V9 H0.5 Z" fill="none" stroke="#333" stroke-width="0.9"/><path d="M6,1 V9 H9.5 Z" fill="#e0e8f0" stroke="#333" stroke-width="0.9"/><path fill="none" d="M5,0 V10" stroke="#2a7ae0" stroke-width="0.9"/></g>
<g transform="translate(13.60,94.40) scale(1.0)"><path d="M1,8.5 Q1,3 5,3 Q9,3 9,8.5 Z" fill="#4a80c8"/><path d="M2.5,8.5 Q2.5,5 5,5 Q7.5,5 7.5,8.5" fill="#dde8f4"/><path fill="none" d="M4,1 H6" stroke="#333" stroke-width="0.9"/></g>
<g transform="translate(13.60,106.30) scale(1.0)"><rect x="0.8" y="0.8" width="3.6" height="3.6" fill="none" stroke="#333" stroke-width="0.9"/><rect x="5.6" y="0.8" width="3.6" height="3.6" fill="none" stroke="#333" stroke-width="0.9"/><rect x="0.8" y="5.6" width="3.6" height="3.6" fill="none" stroke="#333" stroke-width="0.9"/><rect x="5.6" y="5.6" width="3.6" height="3.6" fill="none" stroke="#333" stroke-width="0.9"/></g>
<g transform="translate(13.60,118.20) scale(1.0)"><path fill="none" d="M5,0.5 V9.5 M0.5,5 H9.5" stroke="#2a5aa8" stroke-width="1.1"/><path d="M5,0 L3.3,2 H6.7 Z M5,10 L3.3,8 H6.7 Z M0,5 L2,3.3 V6.7 Z M10,5 L8,3.3 V6.7 Z" fill="#2a5aa8"/></g>
<g transform="translate(13.60,130.10) scale(1.0)"><path d="M3,1.8 A3.8,3.8 0 1 0 7.5,2.2" stroke="#2a5aa8" stroke-width="1.2" fill="none"/><path d="M1.5,0.3 L4,2 L1.5,3.5 Z" fill="#2a5aa8"/></g>
<g transform="translate(13.60,142.00) scale(1.0)"><rect x="1" y="1" width="8" height="8" fill="#eef4fa" stroke="#2a5a98" stroke-width="0.9"/><rect x="1" y="5" width="4" height="4" fill="#c8d8ea" stroke="#2a5a98" stroke-width="0.9"/></g>
<g transform="translate(13.60,153.90) scale(1.0)"><path d="M1.5,1 H5 L9,9 H1.5 Z" fill="#eef4fa" stroke="#333" stroke-width="0.9"/><path fill="none" d="M3.5,1 V9" stroke="#333" stroke-width="0.9"/></g>
<g transform="translate(13.60,165.80) scale(1.0)"><path fill="none" d="M0.5,5.5 H4 M6,5.5 H9.5" stroke="#4a7ab8" stroke-width="0.8"/><path fill="none" d="M3.5,9 L7,1.5" stroke="#2a5aa8" stroke-width="1"/></g>
<g transform="translate(13.60,177.70) scale(1.0)"><path fill="none" d="M0.5,5.5 H5" stroke="#333" stroke-width="1"/><path fill="none" d="M5.5,9 L9,1.5" stroke="#2a5aa8" stroke-width="1"/></g>
<g transform="translate(13.60,189.60) scale(1.0)"><path d="M1,2 H9 V8.5 H1 Z" fill="#dde8f4" stroke="#333" stroke-width="0.9"/></g>
<g transform="translate(13.60,201.50) scale(1.0)"><path d="M1,1.5 H3 M7,1.5 H9 V8.5 H1 V1.5" fill="#dde8f4" stroke="#333" stroke-width="0.9"/></g>
<g transform="translate(13.60,213.40) scale(1.0)"><path fill="none" d="M0.5,5 H9.5" stroke="#222" stroke-width="0.9"/><path d="M1,3 L4.5,5 L1,7 Z M9,3 L5.5,5 L9,7 Z" fill="#222"/></g>
<g transform="translate(13.60,225.30) scale(1.0)"><path d="M1,9.5 V5 Q1,1 8.5,1" stroke="#2a5aa8" stroke-width="1.1" fill="none"/><path fill="none" d="M1,1 H9" stroke="#aaa" stroke-width="0.8"/></g>
<g transform="translate(13.60,237.20) scale(1.0)"><path d="M1,9.5 V6 Q1,1.5 8.5,1.5" stroke="#1a4aa8" stroke-width="1.3" fill="none"/><path fill="none" d="M1,1 H9" stroke="#aaa" stroke-width="0.8"/></g>
<g transform="translate(13.60,249.10) scale(1.0)"><path fill="none" d="M5,5 L8.5,1" stroke="#8aa0c0" stroke-width="1"/><circle cx="4" cy="6" r="2.8" fill="#f06020"/><circle cx="4" cy="6" r="1.5" fill="#f0d040"/><path fill="none" d="M1,3 L2,4 M7,9 L6,8" stroke="#d03020" stroke-width="1"/></g>
<g transform="translate(755.40,59.00) scale(1.0)"><path fill="none" d="M0.5,5 H8" stroke="#1a3a78" stroke-width="1.1"/><circle cx="1.2" cy="5" r="1.1" fill="#2a7ae0"/><circle cx="8.2" cy="5" r="1.3" fill="none" stroke="#2a7ae0" stroke-width="0.9"/></g>
<g transform="translate(755.40,69.60) scale(1.0)"><path fill="none" d="M1.5,8 V3 H8" stroke="#333" stroke-width="1"/><circle cx="1.5" cy="8" r="1.1" fill="#2a7ae0"/><circle cx="8.3" cy="3" r="1.3" fill="none" stroke="#2a7ae0" stroke-width="0.9"/></g>
<g transform="translate(755.40,84.80) scale(1.0)"><path fill="none" d="M1,9 L9,1" stroke="#333" stroke-width="1"/><circle cx="1.5" cy="8.5" r="1.3" fill="none" stroke="#2a7ae0" stroke-width="0.9"/><circle cx="8.5" cy="1.5" r="1.3" fill="none" stroke="#2a7ae0" stroke-width="0.9"/></g>
<g transform="translate(755.40,97.10) scale(1.0)"><path fill="none" d="M1,9 L9,1" stroke="#333" stroke-width="1"/><circle cx="5" cy="5" r="1.3" fill="none" stroke="#2a7ae0" stroke-width="0.9"/></g>
<g transform="translate(755.40,109.40) scale(1.0)"><path fill="none" d="M1,1 L9,9 M9,1 L1,9" stroke="#222" stroke-width="1.1"/><circle cx="5" cy="5" r="1" fill="#2a7ae0"/></g>
<g transform="translate(755.40,122.20) scale(1.0)"><path fill="none" d="M1,1 L9,9 M9,1 L1,9" stroke="#222" stroke-width="1.1"/><circle cx="5" cy="5" r="1" fill="#2a7ae0"/></g>
<g transform="translate(755.40,133.10) scale(1.0)"><path fill="none" d="M1,5 H3 M4,5 H6 M7,5 H9" stroke="#333" stroke-width="1"/></g>
<g transform="translate(755.40,149.00) scale(1.0)"><circle cx="5" cy="5" r="3.8" fill="#eef4fa" stroke="#333" stroke-width="1"/><circle cx="5" cy="5" r="1.5" fill="none" stroke="#2a7ae0" stroke-width="0.9"/></g>
<g transform="translate(755.40,161.00) scale(1.0)"><path d="M5,1 L9,5 L5,9 L1,5 Z" fill="#bcd8f4" stroke="#2a6ad0" stroke-width="1"/><circle cx="5" cy="5" r="2.5" fill="none" stroke="#2a6ad0" stroke-width="0.8"/></g>
<g transform="translate(755.40,172.70) scale(1.0)"><path d="M2,2 A4,4 0 1 0 8,2" fill="#dde8f4" stroke="#333" stroke-width="1"/><circle cx="5" cy="5" r="1" fill="#2a7ae0"/></g>
<g transform="translate(755.40,188.70) scale(1.0)"><path fill="none" d="M5,1 V7 M1,7 H9" stroke="#333" stroke-width="1"/><circle cx="5" cy="7" r="1.2" fill="#2a7ae0"/></g>
<g transform="translate(755.40,200.30) scale(1.0)"><path fill="none" d="M1,7 L7,1 M3,9 L9,3" stroke="#222" stroke-width="1"/></g>
<g transform="translate(755.40,212.60) scale(1.0)"><rect x="0.5" y="1" width="5" height="4" fill="#3a70b8"/><rect x="4" y="4" width="5" height="5" fill="#f0d040" stroke="#806020" stroke-width="0.6"/></g>
<g transform="translate(755.40,224.20) scale(1.0)"><circle cx="5" cy="5" r="1" fill="#2a7ae0"/></g>
<g transform="translate(755.40,239.40) scale(1.0)"><path fill="none" d="M1,9 L8,2" stroke="#222" stroke-width="1"/><path d="M3,5 Q7,3 9,4" stroke="#2a7ae0" stroke-width="0.9" fill="none"/></g>
<g transform="translate(755.40,251.80) scale(1.0)"><path fill="none" d="M1.5,9 L7,2" stroke="#333" stroke-width="1.1"/><path fill="none" d="M1,5 L4,8" stroke="#d03030" stroke-width="1.2"/><circle cx="8" cy="8.5" r="0.9" fill="none" stroke="#2a7ae0" stroke-width="0.7"/></g>
<g transform="translate(755.40,266.60) scale(1.0)"><path d="M2,9 V4 A3,3 0 0 1 8,4 V8" stroke="#c02020" stroke-width="2" fill="none"/><circle cx="8.5" cy="8.8" r="1" fill="#2a7ae0"/></g>
<rect x="755.5" y="82.5" width="10" height="0.8" fill="#d0d0d0"/>
<rect x="755.5" y="146" width="10" height="0.8" fill="#d0d0d0"/>
<rect x="755.5" y="185.5" width="10" height="0.8" fill="#d0d0d0"/>
<rect x="755.5" y="237" width="10" height="0.8" fill="#d0d0d0"/>
<rect x="769" y="81" width="7" height="0.8" fill="#d0d0d0"/>
<rect x="769" y="155" width="7" height="0.8" fill="#d0d0d0"/>
<rect x="769" y="195.5" width="7" height="0.8" fill="#d0d0d0"/>
<rect x="769" y="235" width="7" height="0.8" fill="#d0d0d0"/>
<rect x="769" y="274.5" width="7" height="0.8" fill="#d0d0d0"/>
<g transform="translate(767.50,58.70) scale(1.0)"><path fill="none" d="M0.5,1 V9 M0.5,2 H9" stroke="#222" stroke-width="1.1"/></g>
<g transform="translate(767.50,68.80) scale(1.0)"><path fill="none" d="M1,2 L7,8 M5,9.5 L9,6" stroke="#222" stroke-width="1.1"/></g>
<g transform="translate(767.50,82.60) scale(1.0)"><path d="M1,9 A7,7 0 0 1 8,2" stroke="#333" stroke-width="1" fill="none"/><circle cx="1.5" cy="8.5" r="1" fill="#2a7ae0"/></g>
<g transform="translate(767.50,94.20) scale(1.0)"><path d="M3,2 V9 H9 L3,3" stroke="#333" stroke-width="0.9" fill="none"/><circle cx="1.5" cy="3" r="0.8" fill="#2a7ae0"/><circle cx="1.5" cy="7" r="0.8" fill="#2a7ae0"/></g>
<g transform="translate(767.50,108.00) scale(1.0)"><circle cx="5" cy="5" r="4" fill="none" stroke="#333" stroke-width="1"/><path fill="none" d="M5,5 L8,2" stroke="#333" stroke-width="1"/></g>
<g transform="translate(767.50,120.00) scale(1.0)"><path fill="none" d="M1,8 L6,2 L4,5 L9,4" stroke="#333" stroke-width="1.1"/></g>
<g transform="translate(767.50,133.00) scale(1.0)"><circle cx="5" cy="5" r="4" fill="none" stroke="#333" stroke-width="1"/><path fill="none" d="M2,8 L8,2" stroke="#333" stroke-width="1"/></g>
<g transform="translate(767.50,144.00) scale(1.0)"><path d="M1,7 L5,3 L9,7 M1,9 H9" stroke="#333" stroke-width="1" fill="none"/></g>
<g transform="translate(767.50,160.00) scale(1.0)"><path fill="none" d="M1,9 L1,1 L9,8" stroke="#222" stroke-width="1.2"/><path d="M3,3 L8,1 L6,7 Z" fill="#e0c020"/></g>
<g transform="translate(767.50,170.00) scale(1.0)"><path fill="none" d="M1,1 V9 M1,5 H9 M9,1 V9" stroke="#333" stroke-width="1.1"/></g>
<g transform="translate(767.50,181.00) scale(1.0)"><path fill="none" d="M1,1 V9 M1,5 H9 M5,1 V9" stroke="#333" stroke-width="1.1"/></g>
<g transform="translate(767.50,198.80) scale(1.0)"><path d="M0.5,2 L3,1 L9,7 L7,9 Z" fill="#e0c020" stroke="#333" stroke-width="0.6"/></g>
<g transform="translate(767.50,211.20) scale(1.0)"><rect x="0.5" y="1" width="9" height="7" fill="#a8c8e8" stroke="#4a7ab0" stroke-width="0.6"/><path fill="none" d="M1,4.5 H9 M4,1 V8" stroke="#6a90c0" stroke-width="0.6"/></g>
<g transform="translate(767.50,222.80) scale(1.0)"><circle cx="5" cy="5" r="4" fill="none" stroke="#333" stroke-width="1"/><circle cx="5" cy="5" r="1" fill="#333"/></g>
<g transform="translate(767.50,237.20) scale(1.0)"><text x="5" y="8" font-size="9" font-weight="bold" fill="#2a5aa8" text-anchor="middle" font-family="Liberation Sans">A</text><path fill="none" d="M0,9.5 H10" stroke="#333" stroke-width="0.8"/></g>
<g transform="translate(767.50,250.00) scale(1.0)"><path fill="none" d="M0.5,9 L9,2" stroke="#333" stroke-width="1.2"/><path d="M5,5 L9,2 L8,6 Z" fill="#e0a020"/></g>
<g transform="translate(767.50,262.40) scale(1.0)"><path fill="none" d="M1,2 V8 M1,5 H9" stroke="#333" stroke-width="1.1"/><path d="M5,4 L9,5 L5,6 Z" fill="#2a5aa8"/></g>
<g transform="translate(767.50,278.70) scale(1.0)"><path fill="none" d="M1,9 L4,5 L7,7 L9,3" stroke="#333" stroke-width="1"/></g>
<g transform="translate(767.50,297.00) scale(1.0)"><rect x="1" y="1" width="7" height="6" fill="#3a80c8"/><rect x="3" y="4" width="7" height="6" fill="#a8d0f0" stroke="#3a70b0" stroke-width="0.6"/></g>
<g transform="translate(767.50,309.00) scale(1.0)"><rect x="1" y="1" width="7" height="6" fill="#3a80c8"/><rect x="3" y="4" width="7" height="6" fill="#a8d0f0" stroke="#3a70b0" stroke-width="0.6"/></g>
<g transform="translate(767.50,322.00) scale(1.0)"><rect x="1" y="1" width="9" height="8" fill="#2a70c0"/></g>
<g transform="translate(767.50,334.00) scale(1.0)"><rect x="1" y="1" width="9" height="8" fill="#2a70c0"/><rect x="3" y="5" width="6" height="4" fill="#c0d8f0"/></g></svg>
<svg class="a" style="left:0;top:0" width="776" height="483" viewBox="0 0 776 483">
<path d="M669,409.5 H757.5 Q763.5,409.5 763.5,415.5 V443.5 Q763.5,449.5 757.5,449.5 H741.5 L739.5,460 L731,449.5 H669 Q663,449.5 663,443.5 V415.5 Q663,409.5 669,409.5 Z" fill="#ffffe1" stroke="#404040" stroke-width="0.8"/>
<circle cx="671.5" cy="418" r="4" fill="#2a5ac8"/><rect x="671" y="417" width="1.2" height="3.5" fill="#fff"/><rect x="671" y="415" width="1.2" height="1.2" fill="#fff"/>
<rect x="750" y="413.5" width="8.5" height="8" fill="#f4f4f0" stroke="#999" stroke-width="0.5"/>
<path d="M752,415.5 L756.5,419.5 M756.5,415.5 L752,419.5" stroke="#000" stroke-width="1.3"/>
</svg>
<div class="t" style="left:682px;top:414.8px;font-size:6.9px;color:#000"><b>通讯中心</b></div>
<div class="t" style="left:672px;top:426.8px;font-size:6.6px;color:#222;letter-spacing:-0.1px">使软件保持最新的简单方法。</div>
<div class="t" style="left:672px;top:435.8px;font-size:6.6px;color:#1a3ab0;letter-spacing:-0.1px"><u>单击此处。</u></div>
</body></html>
